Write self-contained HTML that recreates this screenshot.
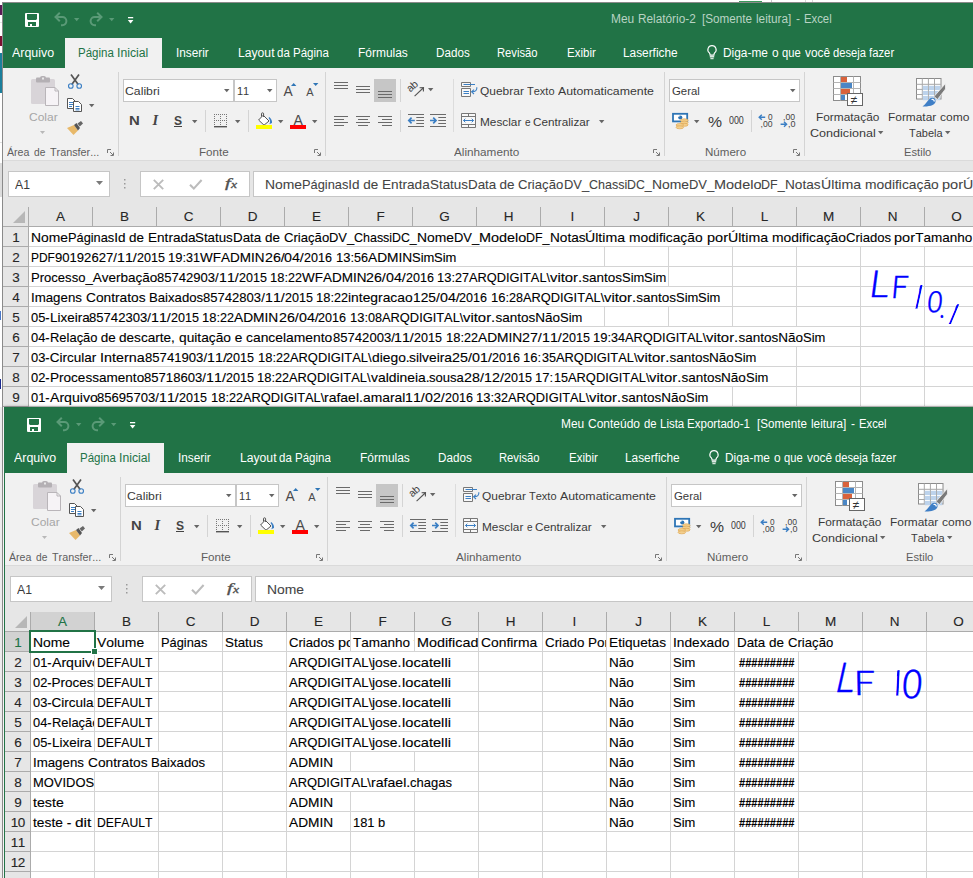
<!DOCTYPE html>
<html lang="pt-BR"><head><meta charset="utf-8"><title>Excel</title>
<style>
html,body{margin:0;padding:0;}
body{width:973px;height:878px;overflow:hidden;position:relative;background:#fff;font-family:"Liberation Sans", sans-serif;color:#3a3a3a;}
div,svg,span{position:absolute;}
.w{overflow:hidden;}
.t,.c,.h{white-space:pre;line-height:20px;height:20px;font-kerning:none;transform-origin:0 0;}
.c{font-size:13.5px;color:#000;-webkit-text-stroke:0.12px #000;}
.f{color:#444;-webkit-text-stroke:0.08px #444;}
.b{font-weight:bold;}
.hs{left:0;top:0;overflow:hidden;transform-origin:0 0;}
.hw{left:0;top:0;line-height:1;-webkit-text-stroke:0.3px #0000ff;white-space:pre;transform-origin:0 0;font-family:'Noto Sans CJK JP','DejaVu Sans','Liberation Sans',sans-serif;}
.h{font-size:13.5px;text-align:center;-webkit-text-stroke:0.12px;}
.n{letter-spacing:-0.5px;}
svg{overflow:visible;}
</style></head><body>
<div style="left:0px;top:5px;width:2px;height:10px;background:#5a1a55;"></div><div style="left:0px;top:22px;width:2px;height:1px;background:#e4e4e4;"></div><div style="left:0px;top:36px;width:2px;height:10px;background:#7a1030;"></div><div style="left:0px;top:53px;width:2px;height:40px;background:#1b7f9c;"></div><div style="left:0px;top:142px;width:2px;height:1px;background:#e0e0e0;"></div><div style="left:0px;top:163px;width:2px;height:34px;background:#dcdcdc;"></div><div style="left:0px;top:311px;width:1px;height:9px;background:#4a78c8;"></div><div style="left:0px;top:379px;width:1px;height:10px;background:#1a2a90;"></div><div style="left:0px;top:407px;width:2px;height:471px;background:#ededed;"></div><div style="left:2px;top:2px;width:1px;height:876px;background:#8a8a8a;"></div><div style="left:3px;top:407px;width:1px;height:471px;background:#f4f4f4;"></div><div style="left:739px;top:1px;width:23px;height:1px;background:#3c9a5c;"></div><div style="left:771px;top:0px;width:1px;height:2px;background:#c8c8c8;"></div><div style="left:805px;top:0px;width:1px;height:2px;background:#d8d8d8;"></div><div style="left:812px;top:0px;width:1px;height:2px;background:#d8d8d8;"></div><div class="w" style="left:0;top:0;width:973px;height:407px"><div style="left:2px;top:2px;width:980px;height:900px;background:#8a8a8a;"></div><div style="left:3px;top:3px;width:980px;height:65px;background:#217346;"></div><div style="left:3px;top:68px;width:980px;height:92px;background:#f1f1f1;"></div><div style="left:3px;top:160px;width:980px;height:1px;background:#dadada;"></div><div style="left:3px;top:161px;width:980px;height:46px;background:#e6e6e6;"></div><span class="t" style="left:611.20px;top:9px;font-size:12.5px;color:#b9d3c4;transform:scaleX(0.954);">Meu </span><span class="t" style="left:638.11px;top:9px;font-size:12.5px;color:#b9d3c4;transform:scaleX(0.944);">Relatório-2  </span><span class="t" style="left:702.41px;top:9px;font-size:12.5px;color:#b9d3c4;transform:scaleX(0.936);">[Somente </span><span class="t" style="left:756.01px;top:9px;font-size:12.5px;color:#b9d3c4;transform:scaleX(0.940);">leitura] </span><span class="t" style="left:796.29px;top:9px;font-size:12.5px;color:#b9d3c4;transform:scaleX(0.962);">- </span><span class="t" style="left:804.14px;top:9px;font-size:12.5px;color:#b9d3c4;transform:scaleX(0.905);">Excel</span><svg style="left:25px;top:13px;" width="14" height="14" viewBox="0 0 14 14"><rect x="0" y="0" width="14" height="14" rx="1" fill="#fff"/><path d="M2 1H12V6L11 7H3L2 6Z" fill="#217346"/><path d="M3 9H11V13H7V11H5V13H3Z" fill="#217346"/></svg><svg style="left:54px;top:12px;" width="14" height="14" viewBox="0 0 14 14"><path d="M1.4 5H8.3A4.1 4.1 0 0 1 8.3 13.2H7" fill="none" stroke="#5a9a77" stroke-width="2"/><path d="M5.8 0.8L1.5 5L5.8 9.2" fill="none" stroke="#5a9a77" stroke-width="2"/></svg><svg style="left:74px;top:18px;" width="5.4" height="3.2" viewBox="0 0 5.4 3.2"><path d="M0 0H5.4L2.7 3.2Z" fill="#5a9a77"/></svg><svg style="left:89px;top:12px;" width="14" height="14" viewBox="0 0 14 14"><path d="M12.6 5H5.7A4.1 4.1 0 0 0 5.7 13.2H7" fill="none" stroke="#5a9a77" stroke-width="2"/><path d="M8.2 0.8L12.5 5L8.2 9.2" fill="none" stroke="#5a9a77" stroke-width="2"/></svg><svg style="left:109px;top:18px;" width="5.4" height="3.2" viewBox="0 0 5.4 3.2"><path d="M0 0H5.4L2.7 3.2Z" fill="#5a9a77"/></svg><svg style="left:128px;top:17px;" width="5" height="7" viewBox="0 0 5 7"><rect x="0" y="0" width="5.2" height="1.3" fill="#fff"/><path d="M-0.2 3H5.4L2.6 6.4Z" fill="#fff"/></svg><div style="left:65px;top:38px;width:97px;height:30px;background:#f1f1f1;"></div><span class="t" style="left:12.25px;top:43px;font-size:12.5px;color:#ffffff;transform:scaleX(0.994);">Arquivo</span><span class="t" style="left:176.31px;top:43px;font-size:12.5px;color:#ffffff;transform:scaleX(0.943);">Inserir</span><span class="t" style="left:357.69px;top:43px;font-size:12.5px;color:#ffffff;transform:scaleX(0.956);">Fórmulas</span><span class="t" style="left:435.62px;top:43px;font-size:12.5px;color:#ffffff;transform:scaleX(0.933);">Dados</span><span class="t" style="left:497.45px;top:43px;font-size:12.5px;color:#ffffff;transform:scaleX(0.899);">Revisão</span><span class="t" style="left:566.53px;top:43px;font-size:12.5px;color:#ffffff;transform:scaleX(0.922);">Exibir</span><span class="t" style="left:623.40px;top:43px;font-size:12.5px;color:#ffffff;transform:scaleX(0.947);">Laserfiche</span><span class="t" style="left:77.73px;top:43px;font-size:12.5px;color:#217346;transform:scaleX(0.922);">Página </span><span class="t" style="left:117.47px;top:43px;font-size:12.5px;color:#217346;transform:scaleX(0.977);">Inicial</span><span class="t" style="left:237.78px;top:43px;font-size:12.5px;color:#ffffff;transform:scaleX(0.973);">Layout </span><span class="t" style="left:277.33px;top:43px;font-size:12.5px;color:#ffffff;transform:scaleX(0.919);">da </span><span class="t" style="left:293.03px;top:43px;font-size:12.5px;color:#ffffff;transform:scaleX(0.922);">Página</span><span class="t" style="left:722.90px;top:43px;font-size:12.5px;color:#ffffff;transform:scaleX(0.950);">Diga-me </span><span class="t" style="left:771.90px;top:43px;font-size:12.5px;color:#ffffff;transform:scaleX(0.950);">o </span><span class="t" style="left:782.16px;top:43px;font-size:12.5px;color:#ffffff;transform:scaleX(0.895);">que </span><span class="t" style="left:805.25px;top:43px;font-size:12.5px;color:#ffffff;transform:scaleX(0.950);">você </span><span class="t" style="left:833.16px;top:43px;font-size:12.5px;color:#ffffff;transform:scaleX(0.895);">deseja </span><span class="t" style="left:868.95px;top:43px;font-size:12.5px;color:#ffffff;transform:scaleX(0.905);">fazer</span><svg style="left:706.6px;top:45px;" width="10" height="15" viewBox="0 0 10 15"><path d="M5 0.6A4.1 4.1 0 0 0 2.4 7.9C2.9 8.6 3.1 9.2 3.1 10.1H6.9C6.9 9.2 7.1 8.6 7.6 7.9A4.1 4.1 0 0 0 5 0.6Z" fill="none" stroke="#fff" stroke-width="1.15"/><path d="M2.8 11.8H7.2" stroke="#fff" stroke-width="1.3" fill="none"/><path d="M3.4 13.7H6.6" stroke="#fff" stroke-width="1" fill="none"/></svg><svg style="left:31px;top:76px;" width="28" height="30" viewBox="0 0 28 30"><rect x="0" y="3" width="24" height="25" rx="1.5" fill="#d8d4d8"/><rect x="5" y="1.5" width="14" height="5" rx="1" fill="#b4b0b4"/><rect x="9" y="0" width="6" height="4" rx="2" fill="#b4b0b4"/><rect x="11" y="1.5" width="2" height="2" fill="#e8e8e8"/><path d="M14.5 11.5H24L27.5 15V29.5H14.5Z" fill="#f6f3f6" stroke="#b9b5b9" stroke-width="1"/><path d="M24 11.5V15H27.5" fill="none" stroke="#b9b5b9" stroke-width="1"/></svg><span class="t" style="left:28.81px;top:107px;font-size:11.5px;color:#a6a6a6;transform:scaleX(1.044);">Colar</span><svg style="left:40px;top:131px;" width="5" height="3" viewBox="0 0 5 3"><path d="M0 0H5L2.5 3Z" fill="#b8b8b8"/></svg><svg style="left:68px;top:74px;" width="14" height="15" viewBox="0 0 14 15"><path d="M3 0.5L10.2 10.5M11 0.5L3.8 10.5" stroke="#555" stroke-width="1.7" fill="none"/><circle cx="2.8" cy="12" r="2.3" fill="none" stroke="#3b7fc4" stroke-width="1.1"/><circle cx="11.2" cy="12" r="2.3" fill="none" stroke="#3b7fc4" stroke-width="1.1"/></svg><svg style="left:67px;top:98px;" width="16" height="14" viewBox="0 0 16 14"><path d="M0.5 0.5H5.5L8.5 3.5V10.5H0.5Z" fill="#fff" stroke="#555"/><path d="M2 4.5H6M2 6.5H6M2 8.5H5" stroke="#3b7fc4" fill="none"/><path d="M6.5 3.5H11.5L14.5 6.5V13.5H6.5Z" fill="#fff" stroke="#555"/><path d="M8.5 8.5H12.5M8.5 10.5H12.5M8.5 11.9H12.5" stroke="#3b7fc4" fill="none"/></svg><svg style="left:89px;top:104px;" width="5.4" height="3.3" viewBox="0 0 5.4 3.3"><path d="M0 0H5.4L2.7 3.3Z" fill="#666666"/></svg><svg style="left:67px;top:121px;" width="16" height="14" viewBox="0 0 16 14"><path d="M0 7L7 4L11 9.5L6.5 14Z" fill="#e8b96a"/><path d="M7 4L9.5 2L13 7L11 9.5Z" fill="#555"/><path d="M10.5 2.5L14 0L16 2.5L12.8 5.5Z" fill="#666"/></svg><span class="t" style="left:7.45px;top:142px;font-size:11.5px;color:#5e5e5e;transform:scaleX(0.923);">Área </span><span class="t" style="left:33.55px;top:142px;font-size:11.5px;color:#5e5e5e;transform:scaleX(0.885);">de </span><span class="t" style="left:49.55px;top:142px;font-size:11.5px;color:#5e5e5e;transform:scaleX(0.938);">Transfer...</span><svg style="left:107px;top:149px;" width="7" height="7" viewBox="0 0 7 7"><path d="M0.5 4V0.5H4" fill="none" stroke="#777" stroke-width="1"/><path d="M3 3L6 6M6.5 3.5V6.5H3.5" fill="none" stroke="#777" stroke-width="1"/></svg><div style="left:118px;top:72px;width:1px;height:84px;background:#d4d4d4;"></div><div style="left:123px;top:79px;width:111px;height:23px;background:#fff;border:1px solid #c6c6c6;box-sizing:border-box;"></div><span class="t" style="left:125.48px;top:81px;font-size:11.5px;transform:scaleX(1.066);">Calibri</span><svg style="left:224px;top:89px;" width="5.5" height="3.3" viewBox="0 0 5.5 3.3"><path d="M0 0H5.5L2.75 3.3Z" fill="#666666"/></svg><div style="left:234px;top:79px;width:43px;height:23px;background:#fff;border:1px solid #c6c6c6;box-sizing:border-box;"></div><span class="t" style="left:237.10px;top:81px;font-size:11.5px;transform:scaleX(0.955);">11</span><svg style="left:266.8px;top:89px;" width="5.5" height="3.3" viewBox="0 0 5.5 3.3"><path d="M0 0H5.5L2.75 3.3Z" fill="#666666"/></svg><span class="t" style="left:283.55px;top:82px;font-size:13.8px;color:#4a4a4a;">A</span><svg style="left:291px;top:83px;" width="5.4" height="3" viewBox="0 0 5.4 3"><path d="M0 3H5.4L2.7 0Z" fill="#2e75b6"/></svg><span class="t" style="left:306.35px;top:82px;font-size:11px;color:#4a4a4a;">A</span><svg style="left:313px;top:83px;" width="5.4" height="3" viewBox="0 0 5.4 3"><path d="M0 0H5.4L2.7 3Z" fill="#2e75b6"/></svg><span class="t" style="left:128.86px;top:111px;font-size:12.5px;color:#444;transform:scaleX(1.193);font-weight:bold;">N</span><span class="t" style="left:152.45px;top:110px;font-size:14.5px;color:#444;font-weight:bold;font-style:italic;font-family:'Liberation Serif', serif;">I</span><span class="t" style="left:173.79px;top:111px;font-size:12.5px;color:#444;transform:scaleX(0.964);font-weight:bold;">S</span><div style="left:174px;top:126px;width:8px;height:1px;background:#444;"></div><svg style="left:191.7px;top:120px;" width="5.4" height="3.3" viewBox="0 0 5.4 3.3"><path d="M0 0H5.4L2.7 3.3Z" fill="#666666"/></svg><div style="left:205px;top:110px;width:1px;height:22px;background:#d4d4d4;"></div><svg style="left:214px;top:114px;" width="14" height="14" viewBox="0 0 14 14"><rect x="0" y="0" width="1" height="1" fill="#777"/><rect x="2" y="0" width="1" height="1" fill="#777"/><rect x="4" y="0" width="1" height="1" fill="#777"/><rect x="6" y="0" width="1" height="1" fill="#777"/><rect x="8" y="0" width="1" height="1" fill="#777"/><rect x="10" y="0" width="1" height="1" fill="#777"/><rect x="12" y="0" width="1" height="1" fill="#777"/><rect x="0" y="6" width="1" height="1" fill="#777"/><rect x="2" y="6" width="1" height="1" fill="#777"/><rect x="4" y="6" width="1" height="1" fill="#777"/><rect x="6" y="6" width="1" height="1" fill="#777"/><rect x="8" y="6" width="1" height="1" fill="#777"/><rect x="10" y="6" width="1" height="1" fill="#777"/><rect x="12" y="6" width="1" height="1" fill="#777"/><rect x="0" y="0" width="1" height="1" fill="#777"/><rect x="0" y="2" width="1" height="1" fill="#777"/><rect x="0" y="4" width="1" height="1" fill="#777"/><rect x="0" y="6" width="1" height="1" fill="#777"/><rect x="0" y="8" width="1" height="1" fill="#777"/><rect x="0" y="10" width="1" height="1" fill="#777"/><rect x="6" y="0" width="1" height="1" fill="#777"/><rect x="6" y="2" width="1" height="1" fill="#777"/><rect x="6" y="4" width="1" height="1" fill="#777"/><rect x="6" y="6" width="1" height="1" fill="#777"/><rect x="6" y="8" width="1" height="1" fill="#777"/><rect x="6" y="10" width="1" height="1" fill="#777"/><rect x="12" y="0" width="1" height="1" fill="#777"/><rect x="12" y="2" width="1" height="1" fill="#777"/><rect x="12" y="4" width="1" height="1" fill="#777"/><rect x="12" y="6" width="1" height="1" fill="#777"/><rect x="12" y="8" width="1" height="1" fill="#777"/><rect x="12" y="10" width="1" height="1" fill="#777"/><rect x="0" y="12" width="13" height="1.4" fill="#555"/></svg><svg style="left:235px;top:120px;" width="5.4" height="3.3" viewBox="0 0 5.4 3.3"><path d="M0 0H5.4L2.7 3.3Z" fill="#666666"/></svg><div style="left:248px;top:110px;width:1px;height:22px;background:#d4d4d4;"></div><svg style="left:256px;top:112px;" width="17" height="17" viewBox="0 0 17 17"><path d="M7.2 3.2L13 9L8 13.2L2.6 8Z" fill="#fff" stroke="#555" stroke-width="1"/><path d="M5.5 4.5V1.8Q5.5 0.8 6.5 0.8Q7.6 0.8 7.6 1.8V5" stroke="#555" fill="none"/><path d="M13.3 5C15.5 7 16.3 9 16 11L13.3 12.3C14.5 10 14.3 8 12.5 6Z" fill="#3b7fc4"/><rect x="0" y="13" width="16" height="4" fill="#ffff00"/></svg><svg style="left:278px;top:120px;" width="5.4" height="3.3" viewBox="0 0 5.4 3.3"><path d="M0 0H5.4L2.7 3.3Z" fill="#666666"/></svg><span class="t" style="left:293.55px;top:110px;font-size:14px;color:#4a4a4a;">A</span><div style="left:290px;top:125px;width:16px;height:4px;background:#ff0000;"></div><svg style="left:312px;top:120px;" width="5.4" height="3.3" viewBox="0 0 5.4 3.3"><path d="M0 0H5.4L2.7 3.3Z" fill="#666666"/></svg><span class="t" style="left:199.04px;top:142px;font-size:11.5px;color:#5e5e5e;transform:scaleX(1.012);">Fonte</span><svg style="left:314px;top:149px;" width="7" height="7" viewBox="0 0 7 7"><path d="M0.5 4V0.5H4" fill="none" stroke="#777" stroke-width="1"/><path d="M3 3L6 6M6.5 3.5V6.5H3.5" fill="none" stroke="#777" stroke-width="1"/></svg><div style="left:325px;top:72px;width:1px;height:84px;background:#d4d4d4;"></div><div style="left:374px;top:79px;width:22px;height:23px;background:#c6c6c6;"></div><svg style="left:334px;top:80px;" width="16" height="16" viewBox="0 0 16 16"><rect x="0" y="2" width="14" height="1" fill="#6a6a6a"/><rect x="0" y="5" width="14" height="1" fill="#6a6a6a"/><rect x="0" y="8" width="14" height="1" fill="#6a6a6a"/></svg><svg style="left:356px;top:80px;" width="16" height="16" viewBox="0 0 16 16"><rect x="0" y="6" width="14" height="1" fill="#6a6a6a"/><rect x="0" y="9" width="14" height="1" fill="#6a6a6a"/><rect x="0" y="12" width="14" height="1" fill="#6a6a6a"/></svg><svg style="left:378px;top:80px;" width="16" height="16" viewBox="0 0 16 16"><rect x="0" y="11" width="14" height="1" fill="#6a6a6a"/><rect x="0" y="14" width="14" height="1" fill="#6a6a6a"/><rect x="0" y="17" width="14" height="1" fill="#6a6a6a"/></svg><div style="left:400px;top:79px;width:1px;height:23px;background:#d4d4d4;"></div><svg style="left:408px;top:81px;" width="18" height="17" viewBox="0 0 18 17"><text x="2.3" y="11.6" font-size="10.5" fill="#444" transform="rotate(-42 2.3 11.6)" font-family="Liberation Sans, sans-serif" letter-spacing="-0.3">ab</text><path d="M6.6 15.2L15.2 7M11.6 6.8L15.5 6.6L15.4 10.4" stroke="#555" fill="none" stroke-width="1.1"/></svg><svg style="left:428px;top:88px;" width="5.4" height="3.3" viewBox="0 0 5.4 3.3"><path d="M0 0H5.4L2.7 3.3Z" fill="#666666"/></svg><svg style="left:334px;top:114px;" width="16" height="16" viewBox="0 0 16 16"><rect x="0" y="2" width="14" height="1" fill="#6a6a6a"/><rect x="0" y="5" width="10" height="1" fill="#6a6a6a"/><rect x="0" y="8" width="14" height="1" fill="#6a6a6a"/><rect x="0" y="11" width="10" height="1" fill="#6a6a6a"/></svg><svg style="left:356px;top:114px;" width="16" height="16" viewBox="0 0 16 16"><rect x="0" y="2" width="14" height="1" fill="#6a6a6a"/><rect x="2" y="5" width="10" height="1" fill="#6a6a6a"/><rect x="0" y="8" width="14" height="1" fill="#6a6a6a"/><rect x="2" y="11" width="10" height="1" fill="#6a6a6a"/></svg><svg style="left:378px;top:114px;" width="16" height="16" viewBox="0 0 16 16"><rect x="0" y="2" width="14" height="1" fill="#6a6a6a"/><rect x="4" y="5" width="10" height="1" fill="#6a6a6a"/><rect x="0" y="8" width="14" height="1" fill="#6a6a6a"/><rect x="4" y="11" width="10" height="1" fill="#6a6a6a"/></svg><div style="left:400px;top:110px;width:1px;height:22px;background:#d4d4d4;"></div><svg style="left:408px;top:114px;" width="16" height="14" viewBox="0 0 16 14"><path d="M0 0.5H16M8.3 3.5H16M8.3 6.5H16M8.3 9.5H16M0 12.5H16" stroke="#6a6a6a" fill="none"/><path d="M6.8 6.5H1M3.6 3.7L0.8 6.5L3.6 9.3" stroke="#3b7fc4" stroke-width="1.7" fill="none"/></svg><svg style="left:430px;top:114px;" width="16" height="14" viewBox="0 0 16 14"><path d="M0 0.5H16M8.3 3.5H16M8.3 6.5H16M8.3 9.5H16M0 12.5H16" stroke="#6a6a6a" fill="none"/><path d="M0 6.5H5.8M3.2 3.7L6 6.5L3.2 9.3" stroke="#3b7fc4" stroke-width="1.7" fill="none"/></svg><div style="left:453px;top:79px;width:1px;height:53px;background:#dcdcdc;"></div><svg style="left:461px;top:82px;" width="17" height="15" viewBox="0 0 17 15"><path d="M0.5 0.5H9.5V4.5H0.5ZM0.5 6.5H9.5V14.5H0.5Z" fill="#f8f8f8" stroke="#777"/><path d="M2.5 2.5H14M2.5 9.5H8M2.5 11.5H8" stroke="#3b7fc4" fill="none"/><path d="M15.8 5.2C16.2 8.2 14.5 9.8 11 9.8M13 7.6L10.6 9.8L13 12" stroke="#3b7fc4" fill="none" stroke-width="1.1"/></svg><span class="t" style="left:479.71px;top:81px;font-size:11.5px;transform:scaleX(1.040);">Quebrar </span><span class="t" style="left:527.45px;top:81px;font-size:11.5px;transform:scaleX(0.957);">Texto </span><span class="t" style="left:557.65px;top:81px;font-size:11.5px;transform:scaleX(1.072);">Automaticamente</span><svg style="left:461px;top:113px;" width="16" height="16" viewBox="0 0 16 16"><path d="M0.5 0.5H14.5V14.5H0.5Z" fill="#f8f8f8" stroke="#777"/><path d="M0.5 3.5H14.5M0.5 11.5H14.5M7.5 0.5V3.5M7.5 11.5V14.5" stroke="#777" fill="none"/><path d="M2.5 7.5H12.5M4.3 5.7L2.5 7.5L4.3 9.3M10.7 5.7L12.5 7.5L10.7 9.3" stroke="#3b7fc4" fill="none"/></svg><span class="t" style="left:479.72px;top:112px;font-size:11.5px;transform:scaleX(1.027);">Mesclar </span><span class="t" style="left:524.95px;top:112px;font-size:11.5px;transform:scaleX(0.867);">e </span><span class="t" style="left:532.83px;top:112px;font-size:11.5px;transform:scaleX(1.019);">Centralizar</span><svg style="left:598.8px;top:120px;" width="5.4" height="3.3" viewBox="0 0 5.4 3.3"><path d="M0 0H5.4L2.7 3.3Z" fill="#666666"/></svg><span class="t" style="left:454.25px;top:142px;font-size:11.5px;color:#5e5e5e;transform:scaleX(1.020);">Alinhamento</span><svg style="left:653px;top:149px;" width="7" height="7" viewBox="0 0 7 7"><path d="M0.5 4V0.5H4" fill="none" stroke="#777" stroke-width="1"/><path d="M3 3L6 6M6.5 3.5V6.5H3.5" fill="none" stroke="#777" stroke-width="1"/></svg><div style="left:664px;top:72px;width:1px;height:84px;background:#d4d4d4;"></div><div style="left:669px;top:79px;width:131px;height:23px;background:#fff;border:1px solid #c6c6c6;box-sizing:border-box;"></div><span class="t" style="left:671.76px;top:81px;font-size:11.5px;transform:scaleX(0.990);">Geral</span><svg style="left:790px;top:89px;" width="5.5" height="3.3" viewBox="0 0 5.5 3.3"><path d="M0 0H5.5L2.75 3.3Z" fill="#666666"/></svg><svg style="left:672px;top:112px;" width="17" height="18" viewBox="0 0 17 18"><rect x="1" y="1.8" width="14.2" height="7.6" fill="#fff" stroke="#2e75b6" stroke-width="1.8"/><circle cx="8.3" cy="5.5" r="2.1" fill="#2e75b6"/><path d="M6 4.2H7.6" stroke="#fff" stroke-width="0.8"/><ellipse cx="12.3" cy="8.3" rx="3.8" ry="1.5" fill="#f3cf8d" stroke="#e0a958" stroke-width="0.7"/><ellipse cx="12.3" cy="10.6" rx="3.8" ry="1.5" fill="#f3cf8d" stroke="#e0a958" stroke-width="0.7"/><ellipse cx="12.3" cy="12.8" rx="3.8" ry="1.5" fill="#f3cf8d" stroke="#e0a958" stroke-width="0.7"/><ellipse cx="7.8" cy="13" rx="3.8" ry="1.5" fill="#f3cf8d" stroke="#e0a958" stroke-width="0.7"/><ellipse cx="7.8" cy="15.3" rx="3.8" ry="1.5" fill="#f3cf8d" stroke="#e0a958" stroke-width="0.7"/></svg><svg style="left:694px;top:120px;" width="5.4" height="3.3" viewBox="0 0 5.4 3.3"><path d="M0 0H5.4L2.7 3.3Z" fill="#666666"/></svg><span class="t" style="left:707.51px;top:112px;font-size:15.2px;transform:scaleX(1.038);">%</span><span class="t" style="left:729.05px;top:110px;font-size:10.6px;transform:scaleX(0.838);">000</span><div style="left:751px;top:110px;width:1px;height:22px;background:#d4d4d4;"></div><svg style="left:758px;top:113px;" width="16" height="16" viewBox="0 0 16 16"><path d="M1.2 4.3H7.2M3.8 1.8L1.2 4.3L3.8 6.8" stroke="#3b7fc4" stroke-width="1.4" fill="none"/><text x="10" y="6.6" font-size="9" font-family="Liberation Sans, sans-serif" fill="#444" textLength="4.6" lengthAdjust="spacingAndGlyphs">0</text><text x="2.6" y="14" font-size="9" font-family="Liberation Sans, sans-serif" fill="#444" textLength="12" lengthAdjust="spacingAndGlyphs">,00</text></svg><svg style="left:780px;top:113px;" width="16" height="16" viewBox="0 0 16 16"><text x="3" y="6.6" font-size="9" font-family="Liberation Sans, sans-serif" fill="#444" textLength="12" lengthAdjust="spacingAndGlyphs">,00</text><path d="M0.6 11.3H6.6M4 8.8L6.6 11.3L4 13.8" stroke="#3b7fc4" stroke-width="1.4" fill="none"/><text x="8" y="14" font-size="9" font-family="Liberation Sans, sans-serif" fill="#444" textLength="7.5" lengthAdjust="spacingAndGlyphs">,0</text></svg><span class="t" style="left:705.24px;top:142px;font-size:11.5px;color:#5e5e5e;transform:scaleX(1.006);">Número</span><svg style="left:793px;top:149px;" width="7" height="7" viewBox="0 0 7 7"><path d="M0.5 4V0.5H4" fill="none" stroke="#777" stroke-width="1"/><path d="M3 3L6 6M6.5 3.5V6.5H3.5" fill="none" stroke="#777" stroke-width="1"/></svg><div style="left:804px;top:72px;width:1px;height:84px;background:#d4d4d4;"></div><svg style="left:833px;top:76px;" width="30" height="30" viewBox="0 0 30 30"><rect x="0.5" y="0.5" width="27" height="24" fill="#fff" stroke="#8c8c8c"/><path d="M0.5 6.5H27.5M0.5 12.5H27.5M0.5 18.5H27.5M7.5 0.5V24.5M20.5 0.5V24.5" stroke="#b4b4b4" fill="none"/><rect x="8" y="1" width="6" height="5" fill="#d9623b"/><rect x="8" y="7" width="11" height="5" fill="#4a86c5"/><rect x="8" y="13" width="9" height="5" fill="#d9623b"/><rect x="8" y="19" width="4" height="5" fill="#4a86c5"/><rect x="14.5" y="17.5" width="15" height="12" fill="#fff" stroke="#666"/><text x="17.8" y="27.5" font-size="12" fill="#333" font-family="Liberation Sans, sans-serif">≠</text></svg><span class="t" style="left:815.52px;top:107px;font-size:11.5px;transform:scaleX(1.033);">Formatação</span><span class="t" style="left:810.46px;top:123px;font-size:11.5px;transform:scaleX(1.094);">Condicional</span><svg style="left:878.3px;top:131px;" width="5.4" height="3.3" viewBox="0 0 5.4 3.3"><path d="M0 0H5.4L2.7 3.3Z" fill="#666666"/></svg><svg style="left:916px;top:78px;" width="31" height="29" viewBox="0 0 31 29"><rect x="0.5" y="0.5" width="24.5" height="20.5" fill="#fff" stroke="#8c8c8c"/><path d="M0.5 6.3H25M0.5 11.4H25M0.5 16.5H25M6.3 0.5V21M12.4 0.5V21M18.5 0.5V21" stroke="#a8a8a8" fill="none"/><rect x="6.8" y="7.8" width="5.2" height="4.2" fill="#bdd3ec"/><rect x="12.899999999999999" y="7.8" width="5.2" height="4.2" fill="#bdd3ec"/><rect x="19.0" y="7.8" width="5.2" height="4.2" fill="#bdd3ec"/><rect x="6.8" y="12.899999999999999" width="5.2" height="4.2" fill="#bdd3ec"/><rect x="12.899999999999999" y="12.899999999999999" width="5.2" height="4.2" fill="#bdd3ec"/><rect x="19.0" y="12.899999999999999" width="5.2" height="4.2" fill="#bdd3ec"/><rect x="6.8" y="18.0" width="5.2" height="4.2" fill="#bdd3ec"/><rect x="12.899999999999999" y="18.0" width="5.2" height="4.2" fill="#bdd3ec"/><rect x="19.0" y="18.0" width="5.2" height="4.2" fill="#bdd3ec"/><path d="M29.5 5.5L29.5 11L21.5 21.5L18 18.5Z" fill="#7a7a7a" stroke="#f1f1f1" stroke-width="0.8"/><path d="M6.5 28.5C10 26 11.5 22.5 14 20.5C16 19 19.5 20 19.6 23C19.6 26.5 15 28.8 6.5 28.5Z" fill="#3f7fc6"/><path d="M15.5 21.5C17 21 18.3 21.8 18.3 23.5" stroke="#fff" stroke-width="1.3" fill="none"/></svg><span class="t" style="left:888.02px;top:107px;font-size:11.5px;transform:scaleX(1.034);">Formatar </span><span class="t" style="left:940.15px;top:107px;font-size:11.5px;transform:scaleX(1.048);">como</span><span class="t" style="left:909.35px;top:123px;font-size:11.5px;transform:scaleX(0.954);">Tabela</span><svg style="left:945px;top:131px;" width="5.4" height="3.3" viewBox="0 0 5.4 3.3"><path d="M0 0H5.4L2.7 3.3Z" fill="#666666"/></svg><span class="t" style="left:904.08px;top:142px;font-size:11.5px;color:#5e5e5e;transform:scaleX(0.972);">Estilo</span><div style="left:8px;top:171px;width:102px;height:26px;background:#fff;border:1px solid #c6c6c6;box-sizing:border-box;"></div><span class="t" style="left:15.25px;top:175px;font-size:13px;transform:scaleX(0.941);">A1</span><svg style="left:96px;top:181px;" width="7" height="4" viewBox="0 0 7 4"><path d="M0 0H7L3.5 4Z" fill="#7a7a7a"/></svg><svg style="left:124px;top:179px;" width="2" height="10" viewBox="0 0 2 10"><rect x="0" y="0" width="1.5" height="1.5" fill="#999"/><rect x="0" y="4" width="1.5" height="1.5" fill="#999"/><rect x="0" y="8" width="1.5" height="1.5" fill="#999"/></svg><div style="left:140px;top:171px;width:110px;height:26px;background:#fff;border:1px solid #c6c6c6;box-sizing:border-box;"></div><svg style="left:153px;top:178.5px;" width="11" height="11" viewBox="0 0 11 11"><path d="M0.8 0.8L10.2 10.2M10.2 0.8L0.8 10.2" stroke="#bcbcbc" stroke-width="1.9" fill="none"/></svg><svg style="left:188.5px;top:178.5px;" width="14" height="11" viewBox="0 0 14 11"><path d="M1 5.8L4.8 9.6L12.6 1" stroke="#bcbcbc" stroke-width="2.1" fill="none"/></svg><span class="t" style="left:225.15px;top:173px;font-size:12.4px;color:#505050;transform:scaleX(1.670);font-style:italic;font-family:'Liberation Serif', serif;-webkit-text-stroke:0.3px #505050;">f</span><span class="t" style="left:230.65px;top:174px;font-size:10.8px;color:#505050;transform:scaleX(1.270);font-style:italic;font-family:'Liberation Serif', serif;-webkit-text-stroke:0.3px #505050;">x</span><div style="left:253px;top:171px;width:730px;height:26px;background:#fff;border:1px solid #c6c6c6;box-sizing:border-box;"></div><div style="left:254px;top:172px;width:730px;height:24px;overflow:hidden"><span class="c f" style="left:10.80px;top:3px;transform:scaleX(1.029);">Nome</span><span class="c f" style="left:47.84px;top:3px;transform:scaleX(0.950);">Páginas</span><span class="c f" style="left:94.21px;top:3px;">Id </span><span class="c f" style="left:109.26px;top:3px;">de </span><span class="c f" style="left:127.99px;top:3px;transform:scaleX(1.009);">Entrada</span><span class="c f" style="left:175.70px;top:3px;transform:scaleX(0.990);">Status</span><span class="c f" style="left:213.58px;top:3px;transform:scaleX(0.992);">Data </span><span class="c f" style="left:245.59px;top:3px;">de </span><span class="c f" style="left:264.33px;top:3px;transform:scaleX(0.974);">Criação</span><span class="c f" style="left:309.62px;top:3px;transform:scaleX(0.960);">DV_</span><span class="c f" style="left:334.83px;top:3px;transform:scaleX(0.927);">Chassi</span><span class="c f" style="left:373.07px;top:3px;transform:scaleX(0.914);">DC_</span><span class="c f" style="left:397.77px;top:3px;transform:scaleX(1.029);">Nome</span><span class="c f" style="left:434.81px;top:3px;transform:scaleX(0.960);">DV_</span><span class="c f" style="left:460.02px;top:3px;transform:scaleX(1.071);">Modelo</span><span class="c f" style="left:507.45px;top:3px;transform:scaleX(0.925);">DF_</span><span class="c f" style="left:531.04px;top:3px;transform:scaleX(1.011);">Notas</span><span class="c f" style="left:566.71px;top:3px;transform:scaleX(1.050);">Última </span><span class="c f" style="left:610.80px;top:3px;transform:scaleX(1.024);">modificação </span><span class="c f" style="left:688.39px;top:3px;transform:scaleX(1.077);">por</span><span class="c f" style="left:709.41px;top:3px;transform:scaleX(1.050);">Última </span><span class="c f" style="left:753.51px;top:3px;transform:scaleX(1.030);">modificação</span></div><div style="left:3px;top:207px;width:980px;height:20px;background:#e6e6e6;"></div><div style="left:29px;top:227px;width:950px;height:180px;background:#fff;"></div><div style="left:3px;top:227px;width:25px;height:180px;background:#e6e6e6;"></div><div style="left:3px;top:226px;width:980px;height:1px;background:#ababab;"></div><div style="left:28px;top:207px;width:1px;height:200px;background:#ababab;"></div><div style="left:92px;top:207px;width:1px;height:19px;background:#ababab;"></div><div style="left:156px;top:207px;width:1px;height:19px;background:#ababab;"></div><div style="left:220px;top:207px;width:1px;height:19px;background:#ababab;"></div><div style="left:284px;top:207px;width:1px;height:19px;background:#ababab;"></div><div style="left:348px;top:207px;width:1px;height:19px;background:#ababab;"></div><div style="left:412px;top:207px;width:1px;height:19px;background:#ababab;"></div><div style="left:476px;top:207px;width:1px;height:19px;background:#ababab;"></div><div style="left:540px;top:207px;width:1px;height:19px;background:#ababab;"></div><div style="left:604px;top:207px;width:1px;height:19px;background:#ababab;"></div><div style="left:668px;top:207px;width:1px;height:19px;background:#ababab;"></div><div style="left:732px;top:207px;width:1px;height:19px;background:#ababab;"></div><div style="left:796px;top:207px;width:1px;height:19px;background:#ababab;"></div><div style="left:860px;top:207px;width:1px;height:19px;background:#ababab;"></div><div style="left:924px;top:207px;width:1px;height:19px;background:#ababab;"></div><div style="left:988px;top:207px;width:1px;height:19px;background:#ababab;"></div><svg style="left:13px;top:211px;" width="12" height="12" viewBox="0 0 12 12"><path d="M12 0V12H0Z" fill="#b7b7b7"/></svg><span class="h" style="left:29px;top:207px;width:63px;color:#262626">A</span><span class="h" style="left:93px;top:207px;width:63px;color:#262626">B</span><span class="h" style="left:157px;top:207px;width:63px;color:#262626">C</span><span class="h" style="left:221px;top:207px;width:63px;color:#262626">D</span><span class="h" style="left:285px;top:207px;width:63px;color:#262626">E</span><span class="h" style="left:349px;top:207px;width:63px;color:#262626">F</span><span class="h" style="left:413px;top:207px;width:63px;color:#262626">G</span><span class="h" style="left:477px;top:207px;width:63px;color:#262626">H</span><span class="h" style="left:541px;top:207px;width:63px;color:#262626">I</span><span class="h" style="left:605px;top:207px;width:63px;color:#262626">J</span><span class="h" style="left:669px;top:207px;width:63px;color:#262626">K</span><span class="h" style="left:733px;top:207px;width:63px;color:#262626">L</span><span class="h" style="left:797px;top:207px;width:63px;color:#262626">M</span><span class="h" style="left:861px;top:207px;width:63px;color:#262626">N</span><span class="h" style="left:925px;top:207px;width:63px;color:#262626">O</span><span class="h n" style="left:3px;top:228px;width:25.5px;color:#262626">1</span><div style="left:3px;top:246px;width:25px;height:1px;background:#ababab;"></div><span class="h n" style="left:3px;top:248px;width:25.5px;color:#262626">2</span><div style="left:3px;top:266px;width:25px;height:1px;background:#ababab;"></div><span class="h n" style="left:3px;top:268px;width:25.5px;color:#262626">3</span><div style="left:3px;top:286px;width:25px;height:1px;background:#ababab;"></div><span class="h n" style="left:3px;top:288px;width:25.5px;color:#262626">4</span><div style="left:3px;top:306px;width:25px;height:1px;background:#ababab;"></div><span class="h n" style="left:3px;top:308px;width:25.5px;color:#262626">5</span><div style="left:3px;top:326px;width:25px;height:1px;background:#ababab;"></div><span class="h n" style="left:3px;top:328px;width:25.5px;color:#262626">6</span><div style="left:3px;top:346px;width:25px;height:1px;background:#ababab;"></div><span class="h n" style="left:3px;top:348px;width:25.5px;color:#262626">7</span><div style="left:3px;top:366px;width:25px;height:1px;background:#ababab;"></div><span class="h n" style="left:3px;top:368px;width:25.5px;color:#262626">8</span><div style="left:3px;top:386px;width:25px;height:1px;background:#ababab;"></div><span class="h n" style="left:3px;top:388px;width:25.5px;color:#262626">9</span><div style="left:3px;top:406px;width:25px;height:1px;background:#ababab;"></div><div style="left:29px;top:246px;width:951px;height:1px;background:#d4d4d4;"></div><div style="left:988px;top:227px;width:1px;height:20px;background:#d4d4d4;"></div><span class="c" style="left:31.00px;top:228px;transform:scaleX(1.026);">Nome</span><span class="c" style="left:67.93px;top:228px;transform:scaleX(0.948);">Páginas</span><span class="c" style="left:114.17px;top:228px;">Id </span><span class="c" style="left:129.18px;top:228px;transform:scaleX(0.996);">de </span><span class="c" style="left:147.86px;top:228px;transform:scaleX(1.006);">Entrada</span><span class="c" style="left:195.44px;top:228px;transform:scaleX(0.987);">Status</span><span class="c" style="left:233.21px;top:228px;transform:scaleX(0.989);">Data </span><span class="c" style="left:265.13px;top:228px;transform:scaleX(0.996);">de </span><span class="c" style="left:283.81px;top:228px;transform:scaleX(0.971);">Criação</span><span class="c" style="left:328.98px;top:228px;transform:scaleX(0.957);">DV_</span><span class="c" style="left:354.12px;top:228px;transform:scaleX(0.924);">Chassi</span><span class="c" style="left:392.25px;top:228px;transform:scaleX(0.912);">DC_</span><span class="c" style="left:416.88px;top:228px;transform:scaleX(1.026);">Nome</span><span class="c" style="left:453.81px;top:228px;transform:scaleX(0.957);">DV_</span><span class="c" style="left:478.95px;top:228px;transform:scaleX(1.068);">Modelo</span><span class="c" style="left:526.25px;top:228px;transform:scaleX(0.922);">DF_</span><span class="c" style="left:549.77px;top:228px;transform:scaleX(1.009);">Notas</span><span class="c" style="left:585.34px;top:228px;transform:scaleX(1.047);">Última </span><span class="c" style="left:629.31px;top:228px;transform:scaleX(1.021);">modificação </span><span class="c" style="left:706.68px;top:228px;transform:scaleX(1.074);">por</span><span class="c" style="left:727.64px;top:228px;transform:scaleX(1.047);">Última </span><span class="c" style="left:771.61px;top:228px;transform:scaleX(1.027);">modificação</span><span class="c" style="left:845.60px;top:228px;transform:scaleX(0.970);">Criados </span><span class="c" style="left:894.37px;top:228px;transform:scaleX(1.074);">por</span><span class="c" style="left:915.33px;top:228px;">Tamanho</span><div style="left:29px;top:266px;width:951px;height:1px;background:#d4d4d4;"></div><div style="left:604px;top:247px;width:1px;height:20px;background:#d4d4d4;"></div><div style="left:668px;top:247px;width:1px;height:20px;background:#d4d4d4;"></div><div style="left:732px;top:247px;width:1px;height:20px;background:#d4d4d4;"></div><div style="left:796px;top:247px;width:1px;height:20px;background:#d4d4d4;"></div><div style="left:860px;top:247px;width:1px;height:20px;background:#d4d4d4;"></div><div style="left:924px;top:247px;width:1px;height:20px;background:#d4d4d4;"></div><div style="left:988px;top:247px;width:1px;height:20px;background:#d4d4d4;"></div><span class="c" style="left:31.00px;top:248px;transform:scaleX(0.885);">PDF</span><span class="c" style="left:54.89px;top:248px;transform:scaleX(0.969);">90192627/</span><span class="c" style="left:116.74px;top:248px;transform:scaleX(1.056);">11/</span><span class="c" style="left:136.55px;top:248px;transform:scaleX(0.930);">2015 </span><span class="c" style="left:167.97px;top:248px;transform:scaleX(0.961);">19:</span><span class="c" style="left:186.00px;top:248px;transform:scaleX(0.933);">31</span><span class="c" style="left:200.02px;top:248px;">WFADMIN</span><span class="c" style="left:264.51px;top:248px;transform:scaleX(1.056);">26/</span><span class="c" style="left:284.32px;top:248px;transform:scaleX(1.056);">04/</span><span class="c" style="left:304.13px;top:248px;transform:scaleX(0.930);">2016 </span><span class="c" style="left:335.55px;top:248px;transform:scaleX(0.961);">13:</span><span class="c" style="left:353.58px;top:248px;transform:scaleX(0.933);">56</span><span class="c" style="left:367.59px;top:248px;transform:scaleX(1.017);">ADMIN</span><span class="c" style="left:411.83px;top:248px;transform:scaleX(0.961);">Sim</span><span class="c" style="left:434.16px;top:248px;transform:scaleX(0.961);">Sim</span><div style="left:29px;top:286px;width:951px;height:1px;background:#d4d4d4;"></div><div style="left:668px;top:267px;width:1px;height:20px;background:#d4d4d4;"></div><div style="left:732px;top:267px;width:1px;height:20px;background:#d4d4d4;"></div><div style="left:796px;top:267px;width:1px;height:20px;background:#d4d4d4;"></div><div style="left:860px;top:267px;width:1px;height:20px;background:#d4d4d4;"></div><div style="left:924px;top:267px;width:1px;height:20px;background:#d4d4d4;"></div><div style="left:988px;top:267px;width:1px;height:20px;background:#d4d4d4;"></div><span class="c" style="left:31.00px;top:268px;transform:scaleX(0.967);">Processo_</span><span class="c" style="left:92.70px;top:268px;">Averbação</span><span class="c" style="left:157.23px;top:268px;transform:scaleX(0.967);">85742903/</span><span class="c" style="left:218.91px;top:268px;transform:scaleX(1.053);">11/</span><span class="c" style="left:238.67px;top:268px;transform:scaleX(0.927);">2015 </span><span class="c" style="left:270.00px;top:268px;transform:scaleX(0.958);">18:</span><span class="c" style="left:287.98px;top:268px;transform:scaleX(0.931);">22</span><span class="c" style="left:301.95px;top:268px;">WFADMIN</span><span class="c" style="left:366.27px;top:268px;transform:scaleX(1.053);">26/</span><span class="c" style="left:386.03px;top:268px;transform:scaleX(1.053);">04/</span><span class="c" style="left:405.78px;top:268px;transform:scaleX(0.927);">2016 </span><span class="c" style="left:437.12px;top:268px;transform:scaleX(0.958);">13:</span><span class="c" style="left:455.10px;top:268px;transform:scaleX(0.931);">27</span><span class="c" style="left:469.07px;top:268px;transform:scaleX(0.948);">ARQDIGITAL\</span><span class="c" style="left:550.18px;top:268px;transform:scaleX(1.098);">vitor.</span><span class="c" style="left:582.29px;top:268px;">santos</span><span class="c" style="left:621.95px;top:268px;transform:scaleX(0.958);">Sim</span><span class="c" style="left:644.22px;top:268px;transform:scaleX(0.958);">Sim</span><div style="left:29px;top:306px;width:951px;height:1px;background:#d4d4d4;"></div><div style="left:732px;top:287px;width:1px;height:20px;background:#d4d4d4;"></div><div style="left:796px;top:287px;width:1px;height:20px;background:#d4d4d4;"></div><div style="left:860px;top:287px;width:1px;height:20px;background:#d4d4d4;"></div><div style="left:924px;top:287px;width:1px;height:20px;background:#d4d4d4;"></div><div style="left:988px;top:287px;width:1px;height:20px;background:#d4d4d4;"></div><span class="c" style="left:31.00px;top:288px;transform:scaleX(0.983);">Imagens </span><span class="c" style="left:85.60px;top:288px;transform:scaleX(1.018);">Contratos </span><span class="c" style="left:149.00px;top:288px;transform:scaleX(0.974);">Baixados</span><span class="c" style="left:203.12px;top:288px;transform:scaleX(0.968);">85742803/</span><span class="c" style="left:264.90px;top:288px;transform:scaleX(1.054);">11/</span><span class="c" style="left:284.69px;top:288px;transform:scaleX(0.929);">2015 </span><span class="c" style="left:316.07px;top:288px;transform:scaleX(0.960);">18:</span><span class="c" style="left:334.08px;top:288px;transform:scaleX(0.932);">22</span><span class="c" style="left:348.08px;top:288px;transform:scaleX(1.026);">integracao</span><span class="c" style="left:412.79px;top:288px;transform:scaleX(1.020);">125/</span><span class="c" style="left:439.57px;top:288px;transform:scaleX(1.054);">04/</span><span class="c" style="left:459.36px;top:288px;transform:scaleX(0.929);">2016 </span><span class="c" style="left:490.75px;top:288px;transform:scaleX(0.960);">16:</span><span class="c" style="left:508.76px;top:288px;transform:scaleX(0.932);">28</span><span class="c" style="left:522.75px;top:288px;transform:scaleX(0.950);">ARQDIGITAL\</span><span class="c" style="left:603.99px;top:288px;transform:scaleX(1.099);">vitor.</span><span class="c" style="left:636.15px;top:288px;">santos</span><span class="c" style="left:675.88px;top:288px;transform:scaleX(0.960);">Sim</span><span class="c" style="left:698.19px;top:288px;transform:scaleX(0.960);">Sim</span><div style="left:29px;top:326px;width:951px;height:1px;background:#d4d4d4;"></div><div style="left:604px;top:307px;width:1px;height:20px;background:#d4d4d4;"></div><div style="left:668px;top:307px;width:1px;height:20px;background:#d4d4d4;"></div><div style="left:732px;top:307px;width:1px;height:20px;background:#d4d4d4;"></div><div style="left:796px;top:307px;width:1px;height:20px;background:#d4d4d4;"></div><div style="left:860px;top:307px;width:1px;height:20px;background:#d4d4d4;"></div><div style="left:924px;top:307px;width:1px;height:20px;background:#d4d4d4;"></div><div style="left:988px;top:307px;width:1px;height:20px;background:#d4d4d4;"></div><span class="c" style="left:31.00px;top:308px;transform:scaleX(0.954);">05-</span><span class="c" style="left:49.62px;top:308px;transform:scaleX(0.997);">Lixeira</span><span class="c" style="left:89.25px;top:308px;transform:scaleX(0.970);">85742303/</span><span class="c" style="left:151.15px;top:308px;transform:scaleX(1.056);">11/</span><span class="c" style="left:170.98px;top:308px;transform:scaleX(0.931);">2015 </span><span class="c" style="left:202.42px;top:308px;transform:scaleX(0.961);">18:</span><span class="c" style="left:220.46px;top:308px;transform:scaleX(0.934);">22</span><span class="c" style="left:234.49px;top:308px;transform:scaleX(1.018);">ADMIN</span><span class="c" style="left:278.75px;top:308px;transform:scaleX(1.056);">26/</span><span class="c" style="left:298.58px;top:308px;transform:scaleX(1.056);">04/</span><span class="c" style="left:318.41px;top:308px;transform:scaleX(0.931);">2016 </span><span class="c" style="left:349.85px;top:308px;transform:scaleX(0.961);">13:</span><span class="c" style="left:367.89px;top:308px;transform:scaleX(0.934);">08</span><span class="c" style="left:381.92px;top:308px;transform:scaleX(0.952);">ARQDIGITAL\</span><span class="c" style="left:463.31px;top:308px;transform:scaleX(1.101);">vitor.</span><span class="c" style="left:495.53px;top:308px;">santos</span><span class="c" style="left:535.33px;top:308px;">Não</span><span class="c" style="left:560.15px;top:308px;transform:scaleX(0.961);">Sim</span><div style="left:29px;top:346px;width:951px;height:1px;background:#d4d4d4;"></div><div style="left:860px;top:327px;width:1px;height:20px;background:#d4d4d4;"></div><div style="left:924px;top:327px;width:1px;height:20px;background:#d4d4d4;"></div><div style="left:988px;top:327px;width:1px;height:20px;background:#d4d4d4;"></div><span class="c" style="left:31.00px;top:328px;transform:scaleX(0.954);">04-</span><span class="c" style="left:49.61px;top:328px;transform:scaleX(0.959);">Relação </span><span class="c" style="left:100.73px;top:328px;">de </span><span class="c" style="left:119.49px;top:328px;transform:scaleX(1.006);">descarte, </span><span class="c" style="left:179.15px;top:328px;transform:scaleX(1.017);">quitação e </span><span class="c" style="left:246.32px;top:328px;transform:scaleX(1.026);">cancelamento</span><span class="c" style="left:332.52px;top:328px;transform:scaleX(0.969);">85742003/</span><span class="c" style="left:394.38px;top:328px;transform:scaleX(1.056);">11/</span><span class="c" style="left:414.20px;top:328px;transform:scaleX(0.930);">2015 </span><span class="c" style="left:445.62px;top:328px;transform:scaleX(0.961);">18:</span><span class="c" style="left:463.66px;top:328px;transform:scaleX(0.933);">22</span><span class="c" style="left:477.67px;top:328px;transform:scaleX(1.017);">ADMIN</span><span class="c" style="left:521.92px;top:328px;transform:scaleX(1.056);">27/</span><span class="c" style="left:541.73px;top:328px;transform:scaleX(1.056);">11/</span><span class="c" style="left:561.55px;top:328px;transform:scaleX(0.930);">2015 </span><span class="c" style="left:592.97px;top:328px;transform:scaleX(0.961);">19:</span><span class="c" style="left:611.01px;top:328px;transform:scaleX(0.933);">34</span><span class="c" style="left:625.02px;top:328px;transform:scaleX(0.951);">ARQDIGITAL\</span><span class="c" style="left:706.37px;top:328px;transform:scaleX(1.101);">vitor.</span><span class="c" style="left:738.57px;top:328px;">santos</span><span class="c" style="left:778.35px;top:328px;">Não</span><span class="c" style="left:803.16px;top:328px;transform:scaleX(0.961);">Sim</span><div style="left:29px;top:366px;width:951px;height:1px;background:#d4d4d4;"></div><div style="left:796px;top:347px;width:1px;height:20px;background:#d4d4d4;"></div><div style="left:860px;top:347px;width:1px;height:20px;background:#d4d4d4;"></div><div style="left:924px;top:347px;width:1px;height:20px;background:#d4d4d4;"></div><div style="left:988px;top:347px;width:1px;height:20px;background:#d4d4d4;"></div><span class="c" style="left:31.00px;top:348px;transform:scaleX(0.956);">03-</span><span class="c" style="left:49.66px;top:348px;">Circular </span><span class="c" style="left:99.97px;top:348px;transform:scaleX(1.061);">Interna</span><span class="c" style="left:144.56px;top:348px;transform:scaleX(0.972);">85741903/</span><span class="c" style="left:206.56px;top:348px;transform:scaleX(1.058);">11/</span><span class="c" style="left:226.42px;top:348px;transform:scaleX(0.932);">2015 </span><span class="c" style="left:257.92px;top:348px;transform:scaleX(0.963);">18:</span><span class="c" style="left:275.99px;top:348px;transform:scaleX(0.935);">22</span><span class="c" style="left:290.04px;top:348px;transform:scaleX(0.953);">ARQDIGITAL\</span><span class="c" style="left:371.57px;top:348px;transform:scaleX(1.024);">diego.</span><span class="c" style="left:409.24px;top:348px;transform:scaleX(1.023);">silveira</span><span class="c" style="left:452.23px;top:348px;transform:scaleX(1.058);">25/</span><span class="c" style="left:472.09px;top:348px;transform:scaleX(1.058);">01/</span><span class="c" style="left:491.95px;top:348px;transform:scaleX(0.932);">2016 </span><span class="c" style="left:523.45px;top:348px;transform:scaleX(0.963);">16:</span><span class="c" style="left:541.52px;top:348px;transform:scaleX(0.935);">35</span><span class="c" style="left:555.57px;top:348px;transform:scaleX(0.953);">ARQDIGITAL\</span><span class="c" style="left:637.10px;top:348px;transform:scaleX(1.103);">vitor.</span><span class="c" style="left:669.38px;top:348px;">santos</span><span class="c" style="left:709.25px;top:348px;transform:scaleX(1.004);">Não</span><span class="c" style="left:734.11px;top:348px;transform:scaleX(0.963);">Sim</span><div style="left:29px;top:386px;width:951px;height:1px;background:#d4d4d4;"></div><div style="left:796px;top:367px;width:1px;height:20px;background:#d4d4d4;"></div><div style="left:860px;top:367px;width:1px;height:20px;background:#d4d4d4;"></div><div style="left:924px;top:367px;width:1px;height:20px;background:#d4d4d4;"></div><div style="left:988px;top:367px;width:1px;height:20px;background:#d4d4d4;"></div><span class="c" style="left:31.00px;top:368px;transform:scaleX(0.956);">02-</span><span class="c" style="left:49.65px;top:368px;transform:scaleX(1.004);">Processamento</span><span class="c" style="left:143.83px;top:368px;transform:scaleX(0.971);">85718603/</span><span class="c" style="left:205.82px;top:368px;transform:scaleX(1.058);">11/</span><span class="c" style="left:225.67px;top:368px;transform:scaleX(0.932);">2015 </span><span class="c" style="left:257.17px;top:368px;transform:scaleX(0.963);">18:</span><span class="c" style="left:275.24px;top:368px;transform:scaleX(0.935);">22</span><span class="c" style="left:289.28px;top:368px;transform:scaleX(0.953);">ARQDIGITAL\</span><span class="c" style="left:370.80px;top:368px;transform:scaleX(1.029);">valdineia.</span><span class="c" style="left:429.47px;top:368px;transform:scaleX(0.967);">sousa</span><span class="c" style="left:464.29px;top:368px;transform:scaleX(1.058);">28/</span><span class="c" style="left:484.14px;top:368px;transform:scaleX(1.058);">12/</span><span class="c" style="left:504.00px;top:368px;transform:scaleX(0.932);">2015 </span><span class="c" style="left:535.49px;top:368px;transform:scaleX(0.963);">17:</span><span class="c" style="left:553.56px;top:368px;transform:scaleX(0.935);">15</span><span class="c" style="left:567.61px;top:368px;transform:scaleX(0.953);">ARQDIGITAL\</span><span class="c" style="left:649.12px;top:368px;transform:scaleX(1.103);">vitor.</span><span class="c" style="left:681.39px;top:368px;">santos</span><span class="c" style="left:721.25px;top:368px;transform:scaleX(1.004);">Não</span><span class="c" style="left:746.11px;top:368px;transform:scaleX(0.963);">Sim</span><div style="left:29px;top:406px;width:951px;height:1px;background:#d4d4d4;"></div><div style="left:732px;top:387px;width:1px;height:20px;background:#d4d4d4;"></div><div style="left:796px;top:387px;width:1px;height:20px;background:#d4d4d4;"></div><div style="left:860px;top:387px;width:1px;height:20px;background:#d4d4d4;"></div><div style="left:924px;top:387px;width:1px;height:20px;background:#d4d4d4;"></div><div style="left:988px;top:387px;width:1px;height:20px;background:#d4d4d4;"></div><span class="c" style="left:31.00px;top:388px;transform:scaleX(0.954);">01-</span><span class="c" style="left:49.61px;top:388px;transform:scaleX(1.045);">Arquivo</span><span class="c" style="left:97.44px;top:388px;transform:scaleX(0.969);">85695703/</span><span class="c" style="left:159.29px;top:388px;transform:scaleX(1.056);">11/</span><span class="c" style="left:179.10px;top:388px;transform:scaleX(0.930);">2015 </span><span class="c" style="left:210.51px;top:388px;transform:scaleX(0.961);">18:</span><span class="c" style="left:228.54px;top:388px;transform:scaleX(0.933);">22</span><span class="c" style="left:242.55px;top:388px;transform:scaleX(0.951);">ARQDIGITAL\</span><span class="c" style="left:323.87px;top:388px;transform:scaleX(1.037);">rafael.</span><span class="c" style="left:362.77px;top:388px;transform:scaleX(1.024);">amaral</span><span class="c" style="left:405.01px;top:388px;transform:scaleX(1.056);">11/</span><span class="c" style="left:424.82px;top:388px;transform:scaleX(1.056);">02/</span><span class="c" style="left:444.63px;top:388px;transform:scaleX(0.930);">2016 </span><span class="c" style="left:476.05px;top:388px;transform:scaleX(0.961);">13:</span><span class="c" style="left:494.08px;top:388px;transform:scaleX(0.933);">32</span><span class="c" style="left:508.09px;top:388px;transform:scaleX(0.951);">ARQDIGITAL\</span><span class="c" style="left:589.41px;top:388px;transform:scaleX(1.100);">vitor.</span><span class="c" style="left:621.60px;top:388px;">santos</span><span class="c" style="left:661.37px;top:388px;">Não</span><span class="c" style="left:686.17px;top:388px;transform:scaleX(0.961);">Sim</span></div><div style="left:3px;top:397px;width:970px;height:10px;overflow:hidden"><div style="left:1px;top:10px;width:980px;height:20px;box-shadow:0 0 3px 0 rgba(0,0,0,0.45)"></div></div><div class="w" style="left:2px;top:405px;width:971px;height:473px"><div style="left:2px;top:2px;width:980px;height:900px;background:#217346;"></div><div style="left:3px;top:2px;width:980px;height:66px;background:#217346;"></div><div style="left:3px;top:68px;width:980px;height:92px;background:#f1f1f1;"></div><div style="left:3px;top:160px;width:980px;height:1px;background:#dadada;"></div><div style="left:3px;top:161px;width:980px;height:46px;background:#e6e6e6;"></div><span class="t" style="left:558.90px;top:9px;font-size:12.5px;color:#ffffff;transform:scaleX(0.954);">Meu </span><span class="t" style="left:585.79px;top:9px;font-size:12.5px;color:#ffffff;transform:scaleX(0.960);">Conteúdo </span><span class="t" style="left:642.35px;top:9px;font-size:12.5px;color:#ffffff;transform:scaleX(0.904);">de </span><span class="t" style="left:658.03px;top:9px;font-size:12.5px;color:#ffffff;transform:scaleX(0.918);">Lista </span><span class="t" style="left:685.13px;top:9px;font-size:12.5px;color:#ffffff;transform:scaleX(0.925);">Exportado-1  </span><span class="t" style="left:755.42px;top:9px;font-size:12.5px;color:#ffffff;transform:scaleX(0.932);">[Somente </span><span class="t" style="left:809.01px;top:9px;font-size:12.5px;color:#ffffff;transform:scaleX(0.940);">leitura] </span><span class="t" style="left:849.29px;top:9px;font-size:12.5px;color:#ffffff;transform:scaleX(0.960);">- </span><span class="t" style="left:857.15px;top:9px;font-size:12.5px;color:#ffffff;transform:scaleX(0.904);">Excel</span><svg style="left:25px;top:13px;" width="14" height="14" viewBox="0 0 14 14"><rect x="0" y="0" width="14" height="14" rx="1" fill="#fff"/><path d="M2 1H12V6L11 7H3L2 6Z" fill="#217346"/><path d="M3 9H11V13H7V11H5V13H3Z" fill="#217346"/></svg><svg style="left:54px;top:12px;" width="14" height="14" viewBox="0 0 14 14"><path d="M1.4 5H8.3A4.1 4.1 0 0 1 8.3 13.2H7" fill="none" stroke="#5a9a77" stroke-width="2"/><path d="M5.8 0.8L1.5 5L5.8 9.2" fill="none" stroke="#5a9a77" stroke-width="2"/></svg><svg style="left:74px;top:18px;" width="5.4" height="3.2" viewBox="0 0 5.4 3.2"><path d="M0 0H5.4L2.7 3.2Z" fill="#5a9a77"/></svg><svg style="left:89px;top:12px;" width="14" height="14" viewBox="0 0 14 14"><path d="M12.6 5H5.7A4.1 4.1 0 0 0 5.7 13.2H7" fill="none" stroke="#5a9a77" stroke-width="2"/><path d="M8.2 0.8L12.5 5L8.2 9.2" fill="none" stroke="#5a9a77" stroke-width="2"/></svg><svg style="left:109px;top:18px;" width="5.4" height="3.2" viewBox="0 0 5.4 3.2"><path d="M0 0H5.4L2.7 3.2Z" fill="#5a9a77"/></svg><svg style="left:128px;top:17px;" width="5" height="7" viewBox="0 0 5 7"><rect x="0" y="0" width="5.2" height="1.3" fill="#fff"/><path d="M-0.2 3H5.4L2.6 6.4Z" fill="#fff"/></svg><div style="left:65px;top:38px;width:97px;height:30px;background:#f1f1f1;"></div><span class="t" style="left:12.25px;top:43px;font-size:12.5px;color:#ffffff;transform:scaleX(0.994);">Arquivo</span><span class="t" style="left:176.31px;top:43px;font-size:12.5px;color:#ffffff;transform:scaleX(0.943);">Inserir</span><span class="t" style="left:357.69px;top:43px;font-size:12.5px;color:#ffffff;transform:scaleX(0.956);">Fórmulas</span><span class="t" style="left:435.62px;top:43px;font-size:12.5px;color:#ffffff;transform:scaleX(0.933);">Dados</span><span class="t" style="left:497.45px;top:43px;font-size:12.5px;color:#ffffff;transform:scaleX(0.899);">Revisão</span><span class="t" style="left:566.53px;top:43px;font-size:12.5px;color:#ffffff;transform:scaleX(0.922);">Exibir</span><span class="t" style="left:623.40px;top:43px;font-size:12.5px;color:#ffffff;transform:scaleX(0.947);">Laserfiche</span><span class="t" style="left:77.73px;top:43px;font-size:12.5px;color:#217346;transform:scaleX(0.922);">Página </span><span class="t" style="left:117.47px;top:43px;font-size:12.5px;color:#217346;transform:scaleX(0.977);">Inicial</span><span class="t" style="left:237.78px;top:43px;font-size:12.5px;color:#ffffff;transform:scaleX(0.973);">Layout </span><span class="t" style="left:277.33px;top:43px;font-size:12.5px;color:#ffffff;transform:scaleX(0.919);">da </span><span class="t" style="left:293.03px;top:43px;font-size:12.5px;color:#ffffff;transform:scaleX(0.922);">Página</span><span class="t" style="left:722.90px;top:43px;font-size:12.5px;color:#ffffff;transform:scaleX(0.950);">Diga-me </span><span class="t" style="left:771.90px;top:43px;font-size:12.5px;color:#ffffff;transform:scaleX(0.950);">o </span><span class="t" style="left:782.16px;top:43px;font-size:12.5px;color:#ffffff;transform:scaleX(0.895);">que </span><span class="t" style="left:805.25px;top:43px;font-size:12.5px;color:#ffffff;transform:scaleX(0.950);">você </span><span class="t" style="left:833.16px;top:43px;font-size:12.5px;color:#ffffff;transform:scaleX(0.895);">deseja </span><span class="t" style="left:868.95px;top:43px;font-size:12.5px;color:#ffffff;transform:scaleX(0.905);">fazer</span><svg style="left:706.6px;top:45px;" width="10" height="15" viewBox="0 0 10 15"><path d="M5 0.6A4.1 4.1 0 0 0 2.4 7.9C2.9 8.6 3.1 9.2 3.1 10.1H6.9C6.9 9.2 7.1 8.6 7.6 7.9A4.1 4.1 0 0 0 5 0.6Z" fill="none" stroke="#fff" stroke-width="1.15"/><path d="M2.8 11.8H7.2" stroke="#fff" stroke-width="1.3" fill="none"/><path d="M3.4 13.7H6.6" stroke="#fff" stroke-width="1" fill="none"/></svg><svg style="left:31px;top:76px;" width="28" height="30" viewBox="0 0 28 30"><rect x="0" y="3" width="24" height="25" rx="1.5" fill="#d8d4d8"/><rect x="5" y="1.5" width="14" height="5" rx="1" fill="#b4b0b4"/><rect x="9" y="0" width="6" height="4" rx="2" fill="#b4b0b4"/><rect x="11" y="1.5" width="2" height="2" fill="#e8e8e8"/><path d="M14.5 11.5H24L27.5 15V29.5H14.5Z" fill="#f6f3f6" stroke="#b9b5b9" stroke-width="1"/><path d="M24 11.5V15H27.5" fill="none" stroke="#b9b5b9" stroke-width="1"/></svg><span class="t" style="left:28.81px;top:107px;font-size:11.5px;color:#a6a6a6;transform:scaleX(1.044);">Colar</span><svg style="left:40px;top:131px;" width="5" height="3" viewBox="0 0 5 3"><path d="M0 0H5L2.5 3Z" fill="#b8b8b8"/></svg><svg style="left:68px;top:74px;" width="14" height="15" viewBox="0 0 14 15"><path d="M3 0.5L10.2 10.5M11 0.5L3.8 10.5" stroke="#555" stroke-width="1.7" fill="none"/><circle cx="2.8" cy="12" r="2.3" fill="none" stroke="#3b7fc4" stroke-width="1.1"/><circle cx="11.2" cy="12" r="2.3" fill="none" stroke="#3b7fc4" stroke-width="1.1"/></svg><svg style="left:67px;top:98px;" width="16" height="14" viewBox="0 0 16 14"><path d="M0.5 0.5H5.5L8.5 3.5V10.5H0.5Z" fill="#fff" stroke="#555"/><path d="M2 4.5H6M2 6.5H6M2 8.5H5" stroke="#3b7fc4" fill="none"/><path d="M6.5 3.5H11.5L14.5 6.5V13.5H6.5Z" fill="#fff" stroke="#555"/><path d="M8.5 8.5H12.5M8.5 10.5H12.5M8.5 11.9H12.5" stroke="#3b7fc4" fill="none"/></svg><svg style="left:89px;top:104px;" width="5.4" height="3.3" viewBox="0 0 5.4 3.3"><path d="M0 0H5.4L2.7 3.3Z" fill="#666666"/></svg><svg style="left:67px;top:121px;" width="16" height="14" viewBox="0 0 16 14"><path d="M0 7L7 4L11 9.5L6.5 14Z" fill="#e8b96a"/><path d="M7 4L9.5 2L13 7L11 9.5Z" fill="#555"/><path d="M10.5 2.5L14 0L16 2.5L12.8 5.5Z" fill="#666"/></svg><span class="t" style="left:7.45px;top:142px;font-size:11.5px;color:#5e5e5e;transform:scaleX(0.923);">Área </span><span class="t" style="left:33.55px;top:142px;font-size:11.5px;color:#5e5e5e;transform:scaleX(0.885);">de </span><span class="t" style="left:49.55px;top:142px;font-size:11.5px;color:#5e5e5e;transform:scaleX(0.938);">Transfer...</span><svg style="left:107px;top:149px;" width="7" height="7" viewBox="0 0 7 7"><path d="M0.5 4V0.5H4" fill="none" stroke="#777" stroke-width="1"/><path d="M3 3L6 6M6.5 3.5V6.5H3.5" fill="none" stroke="#777" stroke-width="1"/></svg><div style="left:118px;top:72px;width:1px;height:84px;background:#d4d4d4;"></div><div style="left:123px;top:79px;width:111px;height:23px;background:#fff;border:1px solid #c6c6c6;box-sizing:border-box;"></div><span class="t" style="left:125.48px;top:81px;font-size:11.5px;transform:scaleX(1.066);">Calibri</span><svg style="left:224px;top:89px;" width="5.5" height="3.3" viewBox="0 0 5.5 3.3"><path d="M0 0H5.5L2.75 3.3Z" fill="#666666"/></svg><div style="left:234px;top:79px;width:43px;height:23px;background:#fff;border:1px solid #c6c6c6;box-sizing:border-box;"></div><span class="t" style="left:237.10px;top:81px;font-size:11.5px;transform:scaleX(0.955);">11</span><svg style="left:266.8px;top:89px;" width="5.5" height="3.3" viewBox="0 0 5.5 3.3"><path d="M0 0H5.5L2.75 3.3Z" fill="#666666"/></svg><span class="t" style="left:283.55px;top:82px;font-size:13.8px;color:#4a4a4a;">A</span><svg style="left:291px;top:83px;" width="5.4" height="3" viewBox="0 0 5.4 3"><path d="M0 3H5.4L2.7 0Z" fill="#2e75b6"/></svg><span class="t" style="left:306.35px;top:82px;font-size:11px;color:#4a4a4a;">A</span><svg style="left:313px;top:83px;" width="5.4" height="3" viewBox="0 0 5.4 3"><path d="M0 0H5.4L2.7 3Z" fill="#2e75b6"/></svg><span class="t" style="left:128.86px;top:111px;font-size:12.5px;color:#444;transform:scaleX(1.193);font-weight:bold;">N</span><span class="t" style="left:152.45px;top:110px;font-size:14.5px;color:#444;font-weight:bold;font-style:italic;font-family:'Liberation Serif', serif;">I</span><span class="t" style="left:173.79px;top:111px;font-size:12.5px;color:#444;transform:scaleX(0.964);font-weight:bold;">S</span><div style="left:174px;top:126px;width:8px;height:1px;background:#444;"></div><svg style="left:191.7px;top:120px;" width="5.4" height="3.3" viewBox="0 0 5.4 3.3"><path d="M0 0H5.4L2.7 3.3Z" fill="#666666"/></svg><div style="left:205px;top:110px;width:1px;height:22px;background:#d4d4d4;"></div><svg style="left:214px;top:114px;" width="14" height="14" viewBox="0 0 14 14"><rect x="0" y="0" width="1" height="1" fill="#777"/><rect x="2" y="0" width="1" height="1" fill="#777"/><rect x="4" y="0" width="1" height="1" fill="#777"/><rect x="6" y="0" width="1" height="1" fill="#777"/><rect x="8" y="0" width="1" height="1" fill="#777"/><rect x="10" y="0" width="1" height="1" fill="#777"/><rect x="12" y="0" width="1" height="1" fill="#777"/><rect x="0" y="6" width="1" height="1" fill="#777"/><rect x="2" y="6" width="1" height="1" fill="#777"/><rect x="4" y="6" width="1" height="1" fill="#777"/><rect x="6" y="6" width="1" height="1" fill="#777"/><rect x="8" y="6" width="1" height="1" fill="#777"/><rect x="10" y="6" width="1" height="1" fill="#777"/><rect x="12" y="6" width="1" height="1" fill="#777"/><rect x="0" y="0" width="1" height="1" fill="#777"/><rect x="0" y="2" width="1" height="1" fill="#777"/><rect x="0" y="4" width="1" height="1" fill="#777"/><rect x="0" y="6" width="1" height="1" fill="#777"/><rect x="0" y="8" width="1" height="1" fill="#777"/><rect x="0" y="10" width="1" height="1" fill="#777"/><rect x="6" y="0" width="1" height="1" fill="#777"/><rect x="6" y="2" width="1" height="1" fill="#777"/><rect x="6" y="4" width="1" height="1" fill="#777"/><rect x="6" y="6" width="1" height="1" fill="#777"/><rect x="6" y="8" width="1" height="1" fill="#777"/><rect x="6" y="10" width="1" height="1" fill="#777"/><rect x="12" y="0" width="1" height="1" fill="#777"/><rect x="12" y="2" width="1" height="1" fill="#777"/><rect x="12" y="4" width="1" height="1" fill="#777"/><rect x="12" y="6" width="1" height="1" fill="#777"/><rect x="12" y="8" width="1" height="1" fill="#777"/><rect x="12" y="10" width="1" height="1" fill="#777"/><rect x="0" y="12" width="13" height="1.4" fill="#555"/></svg><svg style="left:235px;top:120px;" width="5.4" height="3.3" viewBox="0 0 5.4 3.3"><path d="M0 0H5.4L2.7 3.3Z" fill="#666666"/></svg><div style="left:248px;top:110px;width:1px;height:22px;background:#d4d4d4;"></div><svg style="left:256px;top:112px;" width="17" height="17" viewBox="0 0 17 17"><path d="M7.2 3.2L13 9L8 13.2L2.6 8Z" fill="#fff" stroke="#555" stroke-width="1"/><path d="M5.5 4.5V1.8Q5.5 0.8 6.5 0.8Q7.6 0.8 7.6 1.8V5" stroke="#555" fill="none"/><path d="M13.3 5C15.5 7 16.3 9 16 11L13.3 12.3C14.5 10 14.3 8 12.5 6Z" fill="#3b7fc4"/><rect x="0" y="13" width="16" height="4" fill="#ffff00"/></svg><svg style="left:278px;top:120px;" width="5.4" height="3.3" viewBox="0 0 5.4 3.3"><path d="M0 0H5.4L2.7 3.3Z" fill="#666666"/></svg><span class="t" style="left:293.55px;top:110px;font-size:14px;color:#4a4a4a;">A</span><div style="left:290px;top:125px;width:16px;height:4px;background:#ff0000;"></div><svg style="left:312px;top:120px;" width="5.4" height="3.3" viewBox="0 0 5.4 3.3"><path d="M0 0H5.4L2.7 3.3Z" fill="#666666"/></svg><span class="t" style="left:199.04px;top:142px;font-size:11.5px;color:#5e5e5e;transform:scaleX(1.012);">Fonte</span><svg style="left:314px;top:149px;" width="7" height="7" viewBox="0 0 7 7"><path d="M0.5 4V0.5H4" fill="none" stroke="#777" stroke-width="1"/><path d="M3 3L6 6M6.5 3.5V6.5H3.5" fill="none" stroke="#777" stroke-width="1"/></svg><div style="left:325px;top:72px;width:1px;height:84px;background:#d4d4d4;"></div><div style="left:374px;top:79px;width:22px;height:23px;background:#c6c6c6;"></div><svg style="left:334px;top:80px;" width="16" height="16" viewBox="0 0 16 16"><rect x="0" y="2" width="14" height="1" fill="#6a6a6a"/><rect x="0" y="5" width="14" height="1" fill="#6a6a6a"/><rect x="0" y="8" width="14" height="1" fill="#6a6a6a"/></svg><svg style="left:356px;top:80px;" width="16" height="16" viewBox="0 0 16 16"><rect x="0" y="6" width="14" height="1" fill="#6a6a6a"/><rect x="0" y="9" width="14" height="1" fill="#6a6a6a"/><rect x="0" y="12" width="14" height="1" fill="#6a6a6a"/></svg><svg style="left:378px;top:80px;" width="16" height="16" viewBox="0 0 16 16"><rect x="0" y="11" width="14" height="1" fill="#6a6a6a"/><rect x="0" y="14" width="14" height="1" fill="#6a6a6a"/><rect x="0" y="17" width="14" height="1" fill="#6a6a6a"/></svg><div style="left:400px;top:79px;width:1px;height:23px;background:#d4d4d4;"></div><svg style="left:408px;top:81px;" width="18" height="17" viewBox="0 0 18 17"><text x="2.3" y="11.6" font-size="10.5" fill="#444" transform="rotate(-42 2.3 11.6)" font-family="Liberation Sans, sans-serif" letter-spacing="-0.3">ab</text><path d="M6.6 15.2L15.2 7M11.6 6.8L15.5 6.6L15.4 10.4" stroke="#555" fill="none" stroke-width="1.1"/></svg><svg style="left:428px;top:88px;" width="5.4" height="3.3" viewBox="0 0 5.4 3.3"><path d="M0 0H5.4L2.7 3.3Z" fill="#666666"/></svg><svg style="left:334px;top:114px;" width="16" height="16" viewBox="0 0 16 16"><rect x="0" y="2" width="14" height="1" fill="#6a6a6a"/><rect x="0" y="5" width="10" height="1" fill="#6a6a6a"/><rect x="0" y="8" width="14" height="1" fill="#6a6a6a"/><rect x="0" y="11" width="10" height="1" fill="#6a6a6a"/></svg><svg style="left:356px;top:114px;" width="16" height="16" viewBox="0 0 16 16"><rect x="0" y="2" width="14" height="1" fill="#6a6a6a"/><rect x="2" y="5" width="10" height="1" fill="#6a6a6a"/><rect x="0" y="8" width="14" height="1" fill="#6a6a6a"/><rect x="2" y="11" width="10" height="1" fill="#6a6a6a"/></svg><svg style="left:378px;top:114px;" width="16" height="16" viewBox="0 0 16 16"><rect x="0" y="2" width="14" height="1" fill="#6a6a6a"/><rect x="4" y="5" width="10" height="1" fill="#6a6a6a"/><rect x="0" y="8" width="14" height="1" fill="#6a6a6a"/><rect x="4" y="11" width="10" height="1" fill="#6a6a6a"/></svg><div style="left:400px;top:110px;width:1px;height:22px;background:#d4d4d4;"></div><svg style="left:408px;top:114px;" width="16" height="14" viewBox="0 0 16 14"><path d="M0 0.5H16M8.3 3.5H16M8.3 6.5H16M8.3 9.5H16M0 12.5H16" stroke="#6a6a6a" fill="none"/><path d="M6.8 6.5H1M3.6 3.7L0.8 6.5L3.6 9.3" stroke="#3b7fc4" stroke-width="1.7" fill="none"/></svg><svg style="left:430px;top:114px;" width="16" height="14" viewBox="0 0 16 14"><path d="M0 0.5H16M8.3 3.5H16M8.3 6.5H16M8.3 9.5H16M0 12.5H16" stroke="#6a6a6a" fill="none"/><path d="M0 6.5H5.8M3.2 3.7L6 6.5L3.2 9.3" stroke="#3b7fc4" stroke-width="1.7" fill="none"/></svg><div style="left:453px;top:79px;width:1px;height:53px;background:#dcdcdc;"></div><svg style="left:461px;top:82px;" width="17" height="15" viewBox="0 0 17 15"><path d="M0.5 0.5H9.5V4.5H0.5ZM0.5 6.5H9.5V14.5H0.5Z" fill="#f8f8f8" stroke="#777"/><path d="M2.5 2.5H14M2.5 9.5H8M2.5 11.5H8" stroke="#3b7fc4" fill="none"/><path d="M15.8 5.2C16.2 8.2 14.5 9.8 11 9.8M13 7.6L10.6 9.8L13 12" stroke="#3b7fc4" fill="none" stroke-width="1.1"/></svg><span class="t" style="left:479.71px;top:81px;font-size:11.5px;transform:scaleX(1.040);">Quebrar </span><span class="t" style="left:527.45px;top:81px;font-size:11.5px;transform:scaleX(0.957);">Texto </span><span class="t" style="left:557.65px;top:81px;font-size:11.5px;transform:scaleX(1.072);">Automaticamente</span><svg style="left:461px;top:113px;" width="16" height="16" viewBox="0 0 16 16"><path d="M0.5 0.5H14.5V14.5H0.5Z" fill="#f8f8f8" stroke="#777"/><path d="M0.5 3.5H14.5M0.5 11.5H14.5M7.5 0.5V3.5M7.5 11.5V14.5" stroke="#777" fill="none"/><path d="M2.5 7.5H12.5M4.3 5.7L2.5 7.5L4.3 9.3M10.7 5.7L12.5 7.5L10.7 9.3" stroke="#3b7fc4" fill="none"/></svg><span class="t" style="left:479.72px;top:112px;font-size:11.5px;transform:scaleX(1.027);">Mesclar </span><span class="t" style="left:524.95px;top:112px;font-size:11.5px;transform:scaleX(0.867);">e </span><span class="t" style="left:532.83px;top:112px;font-size:11.5px;transform:scaleX(1.019);">Centralizar</span><svg style="left:598.8px;top:120px;" width="5.4" height="3.3" viewBox="0 0 5.4 3.3"><path d="M0 0H5.4L2.7 3.3Z" fill="#666666"/></svg><span class="t" style="left:454.25px;top:142px;font-size:11.5px;color:#5e5e5e;transform:scaleX(1.020);">Alinhamento</span><svg style="left:653px;top:149px;" width="7" height="7" viewBox="0 0 7 7"><path d="M0.5 4V0.5H4" fill="none" stroke="#777" stroke-width="1"/><path d="M3 3L6 6M6.5 3.5V6.5H3.5" fill="none" stroke="#777" stroke-width="1"/></svg><div style="left:664px;top:72px;width:1px;height:84px;background:#d4d4d4;"></div><div style="left:669px;top:79px;width:131px;height:23px;background:#fff;border:1px solid #c6c6c6;box-sizing:border-box;"></div><span class="t" style="left:671.76px;top:81px;font-size:11.5px;transform:scaleX(0.990);">Geral</span><svg style="left:790px;top:89px;" width="5.5" height="3.3" viewBox="0 0 5.5 3.3"><path d="M0 0H5.5L2.75 3.3Z" fill="#666666"/></svg><svg style="left:672px;top:112px;" width="17" height="18" viewBox="0 0 17 18"><rect x="1" y="1.8" width="14.2" height="7.6" fill="#fff" stroke="#2e75b6" stroke-width="1.8"/><circle cx="8.3" cy="5.5" r="2.1" fill="#2e75b6"/><path d="M6 4.2H7.6" stroke="#fff" stroke-width="0.8"/><ellipse cx="12.3" cy="8.3" rx="3.8" ry="1.5" fill="#f3cf8d" stroke="#e0a958" stroke-width="0.7"/><ellipse cx="12.3" cy="10.6" rx="3.8" ry="1.5" fill="#f3cf8d" stroke="#e0a958" stroke-width="0.7"/><ellipse cx="12.3" cy="12.8" rx="3.8" ry="1.5" fill="#f3cf8d" stroke="#e0a958" stroke-width="0.7"/><ellipse cx="7.8" cy="13" rx="3.8" ry="1.5" fill="#f3cf8d" stroke="#e0a958" stroke-width="0.7"/><ellipse cx="7.8" cy="15.3" rx="3.8" ry="1.5" fill="#f3cf8d" stroke="#e0a958" stroke-width="0.7"/></svg><svg style="left:694px;top:120px;" width="5.4" height="3.3" viewBox="0 0 5.4 3.3"><path d="M0 0H5.4L2.7 3.3Z" fill="#666666"/></svg><span class="t" style="left:707.51px;top:112px;font-size:15.2px;transform:scaleX(1.038);">%</span><span class="t" style="left:729.05px;top:110px;font-size:10.6px;transform:scaleX(0.838);">000</span><div style="left:751px;top:110px;width:1px;height:22px;background:#d4d4d4;"></div><svg style="left:758px;top:113px;" width="16" height="16" viewBox="0 0 16 16"><path d="M1.2 4.3H7.2M3.8 1.8L1.2 4.3L3.8 6.8" stroke="#3b7fc4" stroke-width="1.4" fill="none"/><text x="10" y="6.6" font-size="9" font-family="Liberation Sans, sans-serif" fill="#444" textLength="4.6" lengthAdjust="spacingAndGlyphs">0</text><text x="2.6" y="14" font-size="9" font-family="Liberation Sans, sans-serif" fill="#444" textLength="12" lengthAdjust="spacingAndGlyphs">,00</text></svg><svg style="left:780px;top:113px;" width="16" height="16" viewBox="0 0 16 16"><text x="3" y="6.6" font-size="9" font-family="Liberation Sans, sans-serif" fill="#444" textLength="12" lengthAdjust="spacingAndGlyphs">,00</text><path d="M0.6 11.3H6.6M4 8.8L6.6 11.3L4 13.8" stroke="#3b7fc4" stroke-width="1.4" fill="none"/><text x="8" y="14" font-size="9" font-family="Liberation Sans, sans-serif" fill="#444" textLength="7.5" lengthAdjust="spacingAndGlyphs">,0</text></svg><span class="t" style="left:705.24px;top:142px;font-size:11.5px;color:#5e5e5e;transform:scaleX(1.006);">Número</span><svg style="left:793px;top:149px;" width="7" height="7" viewBox="0 0 7 7"><path d="M0.5 4V0.5H4" fill="none" stroke="#777" stroke-width="1"/><path d="M3 3L6 6M6.5 3.5V6.5H3.5" fill="none" stroke="#777" stroke-width="1"/></svg><div style="left:804px;top:72px;width:1px;height:84px;background:#d4d4d4;"></div><svg style="left:833px;top:76px;" width="30" height="30" viewBox="0 0 30 30"><rect x="0.5" y="0.5" width="27" height="24" fill="#fff" stroke="#8c8c8c"/><path d="M0.5 6.5H27.5M0.5 12.5H27.5M0.5 18.5H27.5M7.5 0.5V24.5M20.5 0.5V24.5" stroke="#b4b4b4" fill="none"/><rect x="8" y="1" width="6" height="5" fill="#d9623b"/><rect x="8" y="7" width="11" height="5" fill="#4a86c5"/><rect x="8" y="13" width="9" height="5" fill="#d9623b"/><rect x="8" y="19" width="4" height="5" fill="#4a86c5"/><rect x="14.5" y="17.5" width="15" height="12" fill="#fff" stroke="#666"/><text x="17.8" y="27.5" font-size="12" fill="#333" font-family="Liberation Sans, sans-serif">≠</text></svg><span class="t" style="left:815.52px;top:107px;font-size:11.5px;transform:scaleX(1.033);">Formatação</span><span class="t" style="left:810.46px;top:123px;font-size:11.5px;transform:scaleX(1.094);">Condicional</span><svg style="left:878.3px;top:131px;" width="5.4" height="3.3" viewBox="0 0 5.4 3.3"><path d="M0 0H5.4L2.7 3.3Z" fill="#666666"/></svg><svg style="left:916px;top:78px;" width="31" height="29" viewBox="0 0 31 29"><rect x="0.5" y="0.5" width="24.5" height="20.5" fill="#fff" stroke="#8c8c8c"/><path d="M0.5 6.3H25M0.5 11.4H25M0.5 16.5H25M6.3 0.5V21M12.4 0.5V21M18.5 0.5V21" stroke="#a8a8a8" fill="none"/><rect x="6.8" y="7.8" width="5.2" height="4.2" fill="#bdd3ec"/><rect x="12.899999999999999" y="7.8" width="5.2" height="4.2" fill="#bdd3ec"/><rect x="19.0" y="7.8" width="5.2" height="4.2" fill="#bdd3ec"/><rect x="6.8" y="12.899999999999999" width="5.2" height="4.2" fill="#bdd3ec"/><rect x="12.899999999999999" y="12.899999999999999" width="5.2" height="4.2" fill="#bdd3ec"/><rect x="19.0" y="12.899999999999999" width="5.2" height="4.2" fill="#bdd3ec"/><rect x="6.8" y="18.0" width="5.2" height="4.2" fill="#bdd3ec"/><rect x="12.899999999999999" y="18.0" width="5.2" height="4.2" fill="#bdd3ec"/><rect x="19.0" y="18.0" width="5.2" height="4.2" fill="#bdd3ec"/><path d="M29.5 5.5L29.5 11L21.5 21.5L18 18.5Z" fill="#7a7a7a" stroke="#f1f1f1" stroke-width="0.8"/><path d="M6.5 28.5C10 26 11.5 22.5 14 20.5C16 19 19.5 20 19.6 23C19.6 26.5 15 28.8 6.5 28.5Z" fill="#3f7fc6"/><path d="M15.5 21.5C17 21 18.3 21.8 18.3 23.5" stroke="#fff" stroke-width="1.3" fill="none"/></svg><span class="t" style="left:888.02px;top:107px;font-size:11.5px;transform:scaleX(1.034);">Formatar </span><span class="t" style="left:940.15px;top:107px;font-size:11.5px;transform:scaleX(1.048);">como</span><span class="t" style="left:909.35px;top:123px;font-size:11.5px;transform:scaleX(0.954);">Tabela</span><svg style="left:945px;top:131px;" width="5.4" height="3.3" viewBox="0 0 5.4 3.3"><path d="M0 0H5.4L2.7 3.3Z" fill="#666666"/></svg><span class="t" style="left:904.08px;top:142px;font-size:11.5px;color:#5e5e5e;transform:scaleX(0.972);">Estilo</span><div style="left:8px;top:171px;width:102px;height:26px;background:#fff;border:1px solid #c6c6c6;box-sizing:border-box;"></div><span class="t" style="left:15.25px;top:175px;font-size:13px;transform:scaleX(0.941);">A1</span><svg style="left:96px;top:181px;" width="7" height="4" viewBox="0 0 7 4"><path d="M0 0H7L3.5 4Z" fill="#7a7a7a"/></svg><svg style="left:124px;top:179px;" width="2" height="10" viewBox="0 0 2 10"><rect x="0" y="0" width="1.5" height="1.5" fill="#999"/><rect x="0" y="4" width="1.5" height="1.5" fill="#999"/><rect x="0" y="8" width="1.5" height="1.5" fill="#999"/></svg><div style="left:140px;top:171px;width:110px;height:26px;background:#fff;border:1px solid #c6c6c6;box-sizing:border-box;"></div><svg style="left:153px;top:178.5px;" width="11" height="11" viewBox="0 0 11 11"><path d="M0.8 0.8L10.2 10.2M10.2 0.8L0.8 10.2" stroke="#bcbcbc" stroke-width="1.9" fill="none"/></svg><svg style="left:188.5px;top:178.5px;" width="14" height="11" viewBox="0 0 14 11"><path d="M1 5.8L4.8 9.6L12.6 1" stroke="#bcbcbc" stroke-width="2.1" fill="none"/></svg><span class="t" style="left:225.15px;top:173px;font-size:12.4px;color:#505050;transform:scaleX(1.670);font-style:italic;font-family:'Liberation Serif', serif;-webkit-text-stroke:0.3px #505050;">f</span><span class="t" style="left:230.65px;top:174px;font-size:10.8px;color:#505050;transform:scaleX(1.270);font-style:italic;font-family:'Liberation Serif', serif;-webkit-text-stroke:0.3px #505050;">x</span><div style="left:253px;top:171px;width:730px;height:26px;background:#fff;border:1px solid #c6c6c6;box-sizing:border-box;"></div><div style="left:254px;top:172px;width:730px;height:24px;overflow:hidden"><span class="c f" style="left:10.80px;top:3px;transform:scaleX(1.029);">Nome</span></div><div style="left:3px;top:207px;width:980px;height:20px;background:#e6e6e6;"></div><div style="left:29px;top:227px;width:950px;height:260px;background:#fff;"></div><div style="left:3px;top:227px;width:25px;height:260px;background:#e6e6e6;"></div><div style="left:29px;top:207px;width:63px;height:19px;background:#d2d2d2;"></div><div style="left:3px;top:227px;width:25px;height:19px;background:#d2d2d2;"></div><div style="left:3px;top:226px;width:980px;height:1px;background:#ababab;"></div><div style="left:28px;top:207px;width:1px;height:280px;background:#ababab;"></div><div style="left:92px;top:207px;width:1px;height:19px;background:#ababab;"></div><div style="left:156px;top:207px;width:1px;height:19px;background:#ababab;"></div><div style="left:220px;top:207px;width:1px;height:19px;background:#ababab;"></div><div style="left:284px;top:207px;width:1px;height:19px;background:#ababab;"></div><div style="left:348px;top:207px;width:1px;height:19px;background:#ababab;"></div><div style="left:412px;top:207px;width:1px;height:19px;background:#ababab;"></div><div style="left:476px;top:207px;width:1px;height:19px;background:#ababab;"></div><div style="left:540px;top:207px;width:1px;height:19px;background:#ababab;"></div><div style="left:604px;top:207px;width:1px;height:19px;background:#ababab;"></div><div style="left:668px;top:207px;width:1px;height:19px;background:#ababab;"></div><div style="left:732px;top:207px;width:1px;height:19px;background:#ababab;"></div><div style="left:796px;top:207px;width:1px;height:19px;background:#ababab;"></div><div style="left:860px;top:207px;width:1px;height:19px;background:#ababab;"></div><div style="left:924px;top:207px;width:1px;height:19px;background:#ababab;"></div><div style="left:988px;top:207px;width:1px;height:19px;background:#ababab;"></div><svg style="left:13px;top:211px;" width="12" height="12" viewBox="0 0 12 12"><path d="M12 0V12H0Z" fill="#b7b7b7"/></svg><span class="h" style="left:29px;top:207px;width:63px;color:#217346">A</span><span class="h" style="left:93px;top:207px;width:63px;color:#262626">B</span><span class="h" style="left:157px;top:207px;width:63px;color:#262626">C</span><span class="h" style="left:221px;top:207px;width:63px;color:#262626">D</span><span class="h" style="left:285px;top:207px;width:63px;color:#262626">E</span><span class="h" style="left:349px;top:207px;width:63px;color:#262626">F</span><span class="h" style="left:413px;top:207px;width:63px;color:#262626">G</span><span class="h" style="left:477px;top:207px;width:63px;color:#262626">H</span><span class="h" style="left:541px;top:207px;width:63px;color:#262626">I</span><span class="h" style="left:605px;top:207px;width:63px;color:#262626">J</span><span class="h" style="left:669px;top:207px;width:63px;color:#262626">K</span><span class="h" style="left:733px;top:207px;width:63px;color:#262626">L</span><span class="h" style="left:797px;top:207px;width:63px;color:#262626">M</span><span class="h" style="left:861px;top:207px;width:63px;color:#262626">N</span><span class="h" style="left:925px;top:207px;width:63px;color:#262626">O</span><span class="h n" style="left:3px;top:228px;width:25.5px;color:#217346">1</span><div style="left:3px;top:246px;width:25px;height:1px;background:#ababab;"></div><span class="h n" style="left:3px;top:248px;width:25.5px;color:#262626">2</span><div style="left:3px;top:266px;width:25px;height:1px;background:#ababab;"></div><span class="h n" style="left:3px;top:268px;width:25.5px;color:#262626">3</span><div style="left:3px;top:286px;width:25px;height:1px;background:#ababab;"></div><span class="h n" style="left:3px;top:288px;width:25.5px;color:#262626">4</span><div style="left:3px;top:306px;width:25px;height:1px;background:#ababab;"></div><span class="h n" style="left:3px;top:308px;width:25.5px;color:#262626">5</span><div style="left:3px;top:326px;width:25px;height:1px;background:#ababab;"></div><span class="h n" style="left:3px;top:328px;width:25.5px;color:#262626">6</span><div style="left:3px;top:346px;width:25px;height:1px;background:#ababab;"></div><span class="h n" style="left:3px;top:348px;width:25.5px;color:#262626">7</span><div style="left:3px;top:366px;width:25px;height:1px;background:#ababab;"></div><span class="h n" style="left:3px;top:368px;width:25.5px;color:#262626">8</span><div style="left:3px;top:386px;width:25px;height:1px;background:#ababab;"></div><span class="h n" style="left:3px;top:388px;width:25.5px;color:#262626">9</span><div style="left:3px;top:406px;width:25px;height:1px;background:#ababab;"></div><span class="h n" style="left:3px;top:408px;width:25.5px;color:#262626">10</span><div style="left:3px;top:426px;width:25px;height:1px;background:#ababab;"></div><span class="h n" style="left:3px;top:428px;width:25.5px;color:#262626">11</span><div style="left:3px;top:446px;width:25px;height:1px;background:#ababab;"></div><span class="h n" style="left:3px;top:448px;width:25.5px;color:#262626">12</span><div style="left:3px;top:466px;width:25px;height:1px;background:#ababab;"></div><span class="h n" style="left:3px;top:468px;width:25.5px;color:#262626">13</span><div style="left:3px;top:486px;width:25px;height:1px;background:#ababab;"></div><div style="left:29px;top:246px;width:951px;height:1px;background:#d4d4d4;"></div><div style="left:92px;top:227px;width:1px;height:20px;background:#d4d4d4;"></div><div style="left:156px;top:227px;width:1px;height:20px;background:#d4d4d4;"></div><div style="left:220px;top:227px;width:1px;height:20px;background:#d4d4d4;"></div><div style="left:284px;top:227px;width:1px;height:20px;background:#d4d4d4;"></div><div style="left:348px;top:227px;width:1px;height:20px;background:#d4d4d4;"></div><div style="left:412px;top:227px;width:1px;height:20px;background:#d4d4d4;"></div><div style="left:476px;top:227px;width:1px;height:20px;background:#d4d4d4;"></div><div style="left:540px;top:227px;width:1px;height:20px;background:#d4d4d4;"></div><div style="left:604px;top:227px;width:1px;height:20px;background:#d4d4d4;"></div><div style="left:668px;top:227px;width:1px;height:20px;background:#d4d4d4;"></div><div style="left:732px;top:227px;width:1px;height:20px;background:#d4d4d4;"></div><div style="left:860px;top:227px;width:1px;height:20px;background:#d4d4d4;"></div><div style="left:924px;top:227px;width:1px;height:20px;background:#d4d4d4;"></div><div style="left:988px;top:227px;width:1px;height:20px;background:#d4d4d4;"></div><div style="left:29px;top:227px;width:63px;height:19px;overflow:hidden"><span class="c" style="left:2.00px;top:1px;transform:scaleX(1.029);">Nome</span></div><div style="left:93px;top:227px;width:63px;height:19px;overflow:hidden"><span class="c" style="left:2.00px;top:1px;transform:scaleX(1.031);">Volume</span></div><div style="left:157px;top:227px;width:63px;height:19px;overflow:hidden"><span class="c" style="left:2.00px;top:1px;transform:scaleX(0.950);">Páginas</span></div><div style="left:221px;top:227px;width:63px;height:19px;overflow:hidden"><span class="c" style="left:2.00px;top:1px;transform:scaleX(0.990);">Status</span></div><div style="left:285px;top:227px;width:63px;height:19px;overflow:hidden"><span class="c" style="left:2.00px;top:1px;transform:scaleX(0.973);">Criados </span><span class="c" style="left:50.90px;top:1px;transform:scaleX(1.077);">por</span></div><div style="left:349px;top:227px;width:63px;height:19px;overflow:hidden"><span class="c" style="left:2.00px;top:1px;">Tamanho </span><span class="c" style="left:62.73px;top:1px;transform:scaleX(1.120);">total</span></div><div style="left:413px;top:227px;width:63px;height:19px;overflow:hidden"><span class="c" style="left:2.00px;top:1px;transform:scaleX(1.063);">Modificado</span></div><div style="left:477px;top:227px;width:63px;height:19px;overflow:hidden"><span class="c" style="left:2.00px;top:1px;transform:scaleX(1.026);">Confirma</span></div><div style="left:541px;top:227px;width:63px;height:19px;overflow:hidden"><span class="c" style="left:2.00px;top:1px;transform:scaleX(0.989);">Criado </span><span class="c" style="left:45.04px;top:1px;transform:scaleX(0.994);">Por</span></div><div style="left:605px;top:227px;width:63px;height:19px;overflow:hidden"><span class="c" style="left:2.00px;top:1px;transform:scaleX(1.014);">Etiquetas</span></div><div style="left:669px;top:227px;width:63px;height:19px;overflow:hidden"><span class="c" style="left:2.00px;top:1px;transform:scaleX(1.017);">Indexado</span></div><div style="left:733px;top:227px;width:319px;height:19px;overflow:hidden"><span class="c" style="left:2.00px;top:1px;transform:scaleX(0.992);">Data </span><span class="c" style="left:34.01px;top:1px;">de </span><span class="c" style="left:52.75px;top:1px;transform:scaleX(0.974);">Criação</span></div><div style="left:29px;top:266px;width:951px;height:1px;background:#d4d4d4;"></div><div style="left:92px;top:247px;width:1px;height:20px;background:#d4d4d4;"></div><div style="left:156px;top:247px;width:1px;height:20px;background:#d4d4d4;"></div><div style="left:220px;top:247px;width:1px;height:20px;background:#d4d4d4;"></div><div style="left:284px;top:247px;width:1px;height:20px;background:#d4d4d4;"></div><div style="left:476px;top:247px;width:1px;height:20px;background:#d4d4d4;"></div><div style="left:540px;top:247px;width:1px;height:20px;background:#d4d4d4;"></div><div style="left:604px;top:247px;width:1px;height:20px;background:#d4d4d4;"></div><div style="left:668px;top:247px;width:1px;height:20px;background:#d4d4d4;"></div><div style="left:732px;top:247px;width:1px;height:20px;background:#d4d4d4;"></div><div style="left:796px;top:247px;width:1px;height:20px;background:#d4d4d4;"></div><div style="left:860px;top:247px;width:1px;height:20px;background:#d4d4d4;"></div><div style="left:924px;top:247px;width:1px;height:20px;background:#d4d4d4;"></div><div style="left:988px;top:247px;width:1px;height:20px;background:#d4d4d4;"></div><div style="left:29px;top:247px;width:63px;height:19px;overflow:hidden"><span class="c" style="left:2.00px;top:1px;transform:scaleX(0.953);">01-</span><span class="c" style="left:20.59px;top:1px;transform:scaleX(1.044);">Arquivo</span></div><div style="left:93px;top:247px;width:191px;height:19px;overflow:hidden"><span class="c" style="left:2.00px;top:1px;transform:scaleX(0.900);">DEFAULT</span></div><div style="left:285px;top:247px;width:319px;height:19px;overflow:hidden"><span class="c" style="left:2.00px;top:1px;transform:scaleX(0.974);">ARQDIGITAL\</span><span class="c" style="left:85.28px;top:1px;transform:scaleX(1.029);">jose.</span><span class="c" style="left:114.61px;top:1px;transform:scaleX(1.086);">locatelli</span></div><div style="left:605px;top:247px;width:63px;height:19px;overflow:hidden"><span class="c" style="left:2.00px;top:1px;">Não</span></div><div style="left:669px;top:247px;width:63px;height:19px;overflow:hidden"><span class="c" style="left:2.00px;top:1px;transform:scaleX(0.960);">Sim</span></div><div style="left:733px;top:247px;width:63px;height:19px;overflow:hidden"><span class="c b" style="left:4.00px;top:1px;transform:scaleX(0.821);">#########</span></div><div style="left:29px;top:286px;width:951px;height:1px;background:#d4d4d4;"></div><div style="left:92px;top:267px;width:1px;height:20px;background:#d4d4d4;"></div><div style="left:156px;top:267px;width:1px;height:20px;background:#d4d4d4;"></div><div style="left:220px;top:267px;width:1px;height:20px;background:#d4d4d4;"></div><div style="left:284px;top:267px;width:1px;height:20px;background:#d4d4d4;"></div><div style="left:476px;top:267px;width:1px;height:20px;background:#d4d4d4;"></div><div style="left:540px;top:267px;width:1px;height:20px;background:#d4d4d4;"></div><div style="left:604px;top:267px;width:1px;height:20px;background:#d4d4d4;"></div><div style="left:668px;top:267px;width:1px;height:20px;background:#d4d4d4;"></div><div style="left:732px;top:267px;width:1px;height:20px;background:#d4d4d4;"></div><div style="left:796px;top:267px;width:1px;height:20px;background:#d4d4d4;"></div><div style="left:860px;top:267px;width:1px;height:20px;background:#d4d4d4;"></div><div style="left:924px;top:267px;width:1px;height:20px;background:#d4d4d4;"></div><div style="left:988px;top:267px;width:1px;height:20px;background:#d4d4d4;"></div><div style="left:29px;top:267px;width:63px;height:19px;overflow:hidden"><span class="c" style="left:2.00px;top:1px;transform:scaleX(0.953);">02-</span><span class="c" style="left:20.59px;top:1px;">Processamento</span></div><div style="left:93px;top:267px;width:191px;height:19px;overflow:hidden"><span class="c" style="left:2.00px;top:1px;transform:scaleX(0.900);">DEFAULT</span></div><div style="left:285px;top:267px;width:319px;height:19px;overflow:hidden"><span class="c" style="left:2.00px;top:1px;transform:scaleX(0.974);">ARQDIGITAL\</span><span class="c" style="left:85.28px;top:1px;transform:scaleX(1.029);">jose.</span><span class="c" style="left:114.61px;top:1px;transform:scaleX(1.086);">locatelli</span></div><div style="left:605px;top:267px;width:63px;height:19px;overflow:hidden"><span class="c" style="left:2.00px;top:1px;">Não</span></div><div style="left:669px;top:267px;width:63px;height:19px;overflow:hidden"><span class="c" style="left:2.00px;top:1px;transform:scaleX(0.960);">Sim</span></div><div style="left:733px;top:267px;width:63px;height:19px;overflow:hidden"><span class="c b" style="left:4.00px;top:1px;transform:scaleX(0.821);">#########</span></div><div style="left:29px;top:306px;width:951px;height:1px;background:#d4d4d4;"></div><div style="left:92px;top:287px;width:1px;height:20px;background:#d4d4d4;"></div><div style="left:156px;top:287px;width:1px;height:20px;background:#d4d4d4;"></div><div style="left:220px;top:287px;width:1px;height:20px;background:#d4d4d4;"></div><div style="left:284px;top:287px;width:1px;height:20px;background:#d4d4d4;"></div><div style="left:476px;top:287px;width:1px;height:20px;background:#d4d4d4;"></div><div style="left:540px;top:287px;width:1px;height:20px;background:#d4d4d4;"></div><div style="left:604px;top:287px;width:1px;height:20px;background:#d4d4d4;"></div><div style="left:668px;top:287px;width:1px;height:20px;background:#d4d4d4;"></div><div style="left:732px;top:287px;width:1px;height:20px;background:#d4d4d4;"></div><div style="left:796px;top:287px;width:1px;height:20px;background:#d4d4d4;"></div><div style="left:860px;top:287px;width:1px;height:20px;background:#d4d4d4;"></div><div style="left:924px;top:287px;width:1px;height:20px;background:#d4d4d4;"></div><div style="left:988px;top:287px;width:1px;height:20px;background:#d4d4d4;"></div><div style="left:29px;top:287px;width:63px;height:19px;overflow:hidden"><span class="c" style="left:2.00px;top:1px;transform:scaleX(0.953);">03-</span><span class="c" style="left:20.59px;top:1px;">Circular </span><span class="c" style="left:70.73px;top:1px;transform:scaleX(1.057);">Interna</span></div><div style="left:93px;top:287px;width:191px;height:19px;overflow:hidden"><span class="c" style="left:2.00px;top:1px;transform:scaleX(0.900);">DEFAULT</span></div><div style="left:285px;top:287px;width:319px;height:19px;overflow:hidden"><span class="c" style="left:2.00px;top:1px;transform:scaleX(0.974);">ARQDIGITAL\</span><span class="c" style="left:85.28px;top:1px;transform:scaleX(1.029);">jose.</span><span class="c" style="left:114.61px;top:1px;transform:scaleX(1.086);">locatelli</span></div><div style="left:605px;top:287px;width:63px;height:19px;overflow:hidden"><span class="c" style="left:2.00px;top:1px;">Não</span></div><div style="left:669px;top:287px;width:63px;height:19px;overflow:hidden"><span class="c" style="left:2.00px;top:1px;transform:scaleX(0.960);">Sim</span></div><div style="left:733px;top:287px;width:63px;height:19px;overflow:hidden"><span class="c b" style="left:4.00px;top:1px;transform:scaleX(0.821);">#########</span></div><div style="left:29px;top:326px;width:951px;height:1px;background:#d4d4d4;"></div><div style="left:92px;top:307px;width:1px;height:20px;background:#d4d4d4;"></div><div style="left:156px;top:307px;width:1px;height:20px;background:#d4d4d4;"></div><div style="left:220px;top:307px;width:1px;height:20px;background:#d4d4d4;"></div><div style="left:284px;top:307px;width:1px;height:20px;background:#d4d4d4;"></div><div style="left:476px;top:307px;width:1px;height:20px;background:#d4d4d4;"></div><div style="left:540px;top:307px;width:1px;height:20px;background:#d4d4d4;"></div><div style="left:604px;top:307px;width:1px;height:20px;background:#d4d4d4;"></div><div style="left:668px;top:307px;width:1px;height:20px;background:#d4d4d4;"></div><div style="left:732px;top:307px;width:1px;height:20px;background:#d4d4d4;"></div><div style="left:796px;top:307px;width:1px;height:20px;background:#d4d4d4;"></div><div style="left:860px;top:307px;width:1px;height:20px;background:#d4d4d4;"></div><div style="left:924px;top:307px;width:1px;height:20px;background:#d4d4d4;"></div><div style="left:988px;top:307px;width:1px;height:20px;background:#d4d4d4;"></div><div style="left:29px;top:307px;width:63px;height:19px;overflow:hidden"><span class="c" style="left:2.00px;top:1px;transform:scaleX(0.953);">04-</span><span class="c" style="left:20.59px;top:1px;transform:scaleX(0.958);">Relação </span><span class="c" style="left:71.66px;top:1px;">de </span><span class="c" style="left:90.39px;top:1px;transform:scaleX(1.005);">descarte, </span><span class="c" style="left:149.98px;top:1px;transform:scaleX(1.016);">quitação e </span><span class="c" style="left:217.08px;top:1px;transform:scaleX(1.024);">cancelamento</span></div><div style="left:93px;top:307px;width:191px;height:19px;overflow:hidden"><span class="c" style="left:2.00px;top:1px;transform:scaleX(0.900);">DEFAULT</span></div><div style="left:285px;top:307px;width:319px;height:19px;overflow:hidden"><span class="c" style="left:2.00px;top:1px;transform:scaleX(0.974);">ARQDIGITAL\</span><span class="c" style="left:85.28px;top:1px;transform:scaleX(1.029);">jose.</span><span class="c" style="left:114.61px;top:1px;transform:scaleX(1.086);">locatelli</span></div><div style="left:605px;top:307px;width:63px;height:19px;overflow:hidden"><span class="c" style="left:2.00px;top:1px;">Não</span></div><div style="left:669px;top:307px;width:63px;height:19px;overflow:hidden"><span class="c" style="left:2.00px;top:1px;transform:scaleX(0.960);">Sim</span></div><div style="left:733px;top:307px;width:63px;height:19px;overflow:hidden"><span class="c b" style="left:4.00px;top:1px;transform:scaleX(0.821);">#########</span></div><div style="left:29px;top:346px;width:951px;height:1px;background:#d4d4d4;"></div><div style="left:92px;top:327px;width:1px;height:20px;background:#d4d4d4;"></div><div style="left:156px;top:327px;width:1px;height:20px;background:#d4d4d4;"></div><div style="left:220px;top:327px;width:1px;height:20px;background:#d4d4d4;"></div><div style="left:284px;top:327px;width:1px;height:20px;background:#d4d4d4;"></div><div style="left:476px;top:327px;width:1px;height:20px;background:#d4d4d4;"></div><div style="left:540px;top:327px;width:1px;height:20px;background:#d4d4d4;"></div><div style="left:604px;top:327px;width:1px;height:20px;background:#d4d4d4;"></div><div style="left:668px;top:327px;width:1px;height:20px;background:#d4d4d4;"></div><div style="left:732px;top:327px;width:1px;height:20px;background:#d4d4d4;"></div><div style="left:796px;top:327px;width:1px;height:20px;background:#d4d4d4;"></div><div style="left:860px;top:327px;width:1px;height:20px;background:#d4d4d4;"></div><div style="left:924px;top:327px;width:1px;height:20px;background:#d4d4d4;"></div><div style="left:988px;top:327px;width:1px;height:20px;background:#d4d4d4;"></div><div style="left:29px;top:327px;width:63px;height:19px;overflow:hidden"><span class="c" style="left:2.00px;top:1px;transform:scaleX(0.953);">05-</span><span class="c" style="left:20.59px;top:1px;transform:scaleX(0.995);">Lixeira</span></div><div style="left:93px;top:327px;width:191px;height:19px;overflow:hidden"><span class="c" style="left:2.00px;top:1px;transform:scaleX(0.900);">DEFAULT</span></div><div style="left:285px;top:327px;width:319px;height:19px;overflow:hidden"><span class="c" style="left:2.00px;top:1px;transform:scaleX(0.974);">ARQDIGITAL\</span><span class="c" style="left:85.28px;top:1px;transform:scaleX(1.029);">jose.</span><span class="c" style="left:114.61px;top:1px;transform:scaleX(1.086);">locatelli</span></div><div style="left:605px;top:327px;width:63px;height:19px;overflow:hidden"><span class="c" style="left:2.00px;top:1px;">Não</span></div><div style="left:669px;top:327px;width:63px;height:19px;overflow:hidden"><span class="c" style="left:2.00px;top:1px;transform:scaleX(0.960);">Sim</span></div><div style="left:733px;top:327px;width:63px;height:19px;overflow:hidden"><span class="c b" style="left:4.00px;top:1px;transform:scaleX(0.821);">#########</span></div><div style="left:29px;top:366px;width:951px;height:1px;background:#d4d4d4;"></div><div style="left:220px;top:347px;width:1px;height:20px;background:#d4d4d4;"></div><div style="left:284px;top:347px;width:1px;height:20px;background:#d4d4d4;"></div><div style="left:348px;top:347px;width:1px;height:20px;background:#d4d4d4;"></div><div style="left:412px;top:347px;width:1px;height:20px;background:#d4d4d4;"></div><div style="left:476px;top:347px;width:1px;height:20px;background:#d4d4d4;"></div><div style="left:540px;top:347px;width:1px;height:20px;background:#d4d4d4;"></div><div style="left:604px;top:347px;width:1px;height:20px;background:#d4d4d4;"></div><div style="left:668px;top:347px;width:1px;height:20px;background:#d4d4d4;"></div><div style="left:732px;top:347px;width:1px;height:20px;background:#d4d4d4;"></div><div style="left:796px;top:347px;width:1px;height:20px;background:#d4d4d4;"></div><div style="left:860px;top:347px;width:1px;height:20px;background:#d4d4d4;"></div><div style="left:924px;top:347px;width:1px;height:20px;background:#d4d4d4;"></div><div style="left:988px;top:347px;width:1px;height:20px;background:#d4d4d4;"></div><div style="left:29px;top:347px;width:255px;height:19px;overflow:hidden"><span class="c" style="left:2.00px;top:1px;transform:scaleX(0.983);">Imagens </span><span class="c" style="left:56.61px;top:1px;transform:scaleX(1.018);">Contratos </span><span class="c" style="left:120.03px;top:1px;transform:scaleX(0.975);">Baixados</span></div><div style="left:285px;top:347px;width:319px;height:19px;overflow:hidden"><span class="c" style="left:2.00px;top:1px;transform:scaleX(1.016);">ADMIN</span></div><div style="left:605px;top:347px;width:63px;height:19px;overflow:hidden"><span class="c" style="left:2.00px;top:1px;">Não</span></div><div style="left:669px;top:347px;width:63px;height:19px;overflow:hidden"><span class="c" style="left:2.00px;top:1px;transform:scaleX(0.960);">Sim</span></div><div style="left:733px;top:347px;width:63px;height:19px;overflow:hidden"><span class="c b" style="left:4.00px;top:1px;transform:scaleX(0.821);">#########</span></div><div style="left:29px;top:386px;width:951px;height:1px;background:#d4d4d4;"></div><div style="left:92px;top:367px;width:1px;height:20px;background:#d4d4d4;"></div><div style="left:156px;top:367px;width:1px;height:20px;background:#d4d4d4;"></div><div style="left:220px;top:367px;width:1px;height:20px;background:#d4d4d4;"></div><div style="left:284px;top:367px;width:1px;height:20px;background:#d4d4d4;"></div><div style="left:476px;top:367px;width:1px;height:20px;background:#d4d4d4;"></div><div style="left:540px;top:367px;width:1px;height:20px;background:#d4d4d4;"></div><div style="left:604px;top:367px;width:1px;height:20px;background:#d4d4d4;"></div><div style="left:668px;top:367px;width:1px;height:20px;background:#d4d4d4;"></div><div style="left:732px;top:367px;width:1px;height:20px;background:#d4d4d4;"></div><div style="left:796px;top:367px;width:1px;height:20px;background:#d4d4d4;"></div><div style="left:860px;top:367px;width:1px;height:20px;background:#d4d4d4;"></div><div style="left:924px;top:367px;width:1px;height:20px;background:#d4d4d4;"></div><div style="left:988px;top:367px;width:1px;height:20px;background:#d4d4d4;"></div><div style="left:29px;top:367px;width:63px;height:19px;overflow:hidden"><span class="c" style="left:2.00px;top:1px;transform:scaleX(0.958);">MOVIDOS</span></div><div style="left:285px;top:367px;width:319px;height:19px;overflow:hidden"><span class="c" style="left:2.00px;top:1px;transform:scaleX(0.958);">ARQDIGITAL\</span><span class="c" style="left:83.94px;top:1px;transform:scaleX(1.045);">rafael.</span><span class="c" style="left:123.13px;top:1px;transform:scaleX(0.962);">chagas</span></div><div style="left:605px;top:367px;width:63px;height:19px;overflow:hidden"><span class="c" style="left:2.00px;top:1px;">Não</span></div><div style="left:669px;top:367px;width:63px;height:19px;overflow:hidden"><span class="c" style="left:2.00px;top:1px;transform:scaleX(0.960);">Sim</span></div><div style="left:733px;top:367px;width:63px;height:19px;overflow:hidden"><span class="c b" style="left:4.00px;top:1px;transform:scaleX(0.821);">#########</span></div><div style="left:29px;top:406px;width:951px;height:1px;background:#d4d4d4;"></div><div style="left:92px;top:387px;width:1px;height:20px;background:#d4d4d4;"></div><div style="left:156px;top:387px;width:1px;height:20px;background:#d4d4d4;"></div><div style="left:220px;top:387px;width:1px;height:20px;background:#d4d4d4;"></div><div style="left:284px;top:387px;width:1px;height:20px;background:#d4d4d4;"></div><div style="left:348px;top:387px;width:1px;height:20px;background:#d4d4d4;"></div><div style="left:412px;top:387px;width:1px;height:20px;background:#d4d4d4;"></div><div style="left:476px;top:387px;width:1px;height:20px;background:#d4d4d4;"></div><div style="left:540px;top:387px;width:1px;height:20px;background:#d4d4d4;"></div><div style="left:604px;top:387px;width:1px;height:20px;background:#d4d4d4;"></div><div style="left:668px;top:387px;width:1px;height:20px;background:#d4d4d4;"></div><div style="left:732px;top:387px;width:1px;height:20px;background:#d4d4d4;"></div><div style="left:796px;top:387px;width:1px;height:20px;background:#d4d4d4;"></div><div style="left:860px;top:387px;width:1px;height:20px;background:#d4d4d4;"></div><div style="left:924px;top:387px;width:1px;height:20px;background:#d4d4d4;"></div><div style="left:988px;top:387px;width:1px;height:20px;background:#d4d4d4;"></div><div style="left:29px;top:387px;width:255px;height:19px;overflow:hidden"><span class="c" style="left:2.00px;top:1px;transform:scaleX(1.054);">teste</span></div><div style="left:285px;top:387px;width:319px;height:19px;overflow:hidden"><span class="c" style="left:2.00px;top:1px;transform:scaleX(1.016);">ADMIN</span></div><div style="left:605px;top:387px;width:63px;height:19px;overflow:hidden"><span class="c" style="left:2.00px;top:1px;">Não</span></div><div style="left:669px;top:387px;width:63px;height:19px;overflow:hidden"><span class="c" style="left:2.00px;top:1px;transform:scaleX(0.960);">Sim</span></div><div style="left:733px;top:387px;width:63px;height:19px;overflow:hidden"><span class="c b" style="left:4.00px;top:1px;transform:scaleX(0.821);">#########</span></div><div style="left:29px;top:426px;width:951px;height:1px;background:#d4d4d4;"></div><div style="left:92px;top:407px;width:1px;height:20px;background:#d4d4d4;"></div><div style="left:156px;top:407px;width:1px;height:20px;background:#d4d4d4;"></div><div style="left:220px;top:407px;width:1px;height:20px;background:#d4d4d4;"></div><div style="left:284px;top:407px;width:1px;height:20px;background:#d4d4d4;"></div><div style="left:348px;top:407px;width:1px;height:20px;background:#d4d4d4;"></div><div style="left:412px;top:407px;width:1px;height:20px;background:#d4d4d4;"></div><div style="left:476px;top:407px;width:1px;height:20px;background:#d4d4d4;"></div><div style="left:540px;top:407px;width:1px;height:20px;background:#d4d4d4;"></div><div style="left:604px;top:407px;width:1px;height:20px;background:#d4d4d4;"></div><div style="left:668px;top:407px;width:1px;height:20px;background:#d4d4d4;"></div><div style="left:732px;top:407px;width:1px;height:20px;background:#d4d4d4;"></div><div style="left:796px;top:407px;width:1px;height:20px;background:#d4d4d4;"></div><div style="left:860px;top:407px;width:1px;height:20px;background:#d4d4d4;"></div><div style="left:924px;top:407px;width:1px;height:20px;background:#d4d4d4;"></div><div style="left:988px;top:407px;width:1px;height:20px;background:#d4d4d4;"></div><div style="left:29px;top:407px;width:63px;height:19px;overflow:hidden"><span class="c" style="left:2.00px;top:1px;transform:scaleX(1.023);">teste - </span><span class="c" style="left:44.22px;top:1px;transform:scaleX(1.147);">dit</span></div><div style="left:93px;top:407px;width:191px;height:19px;overflow:hidden"><span class="c" style="left:2.00px;top:1px;transform:scaleX(0.900);">DEFAULT</span></div><div style="left:285px;top:407px;width:63px;height:19px;overflow:hidden"><span class="c" style="left:2.00px;top:1px;transform:scaleX(1.016);">ADMIN</span></div><div style="left:349px;top:407px;width:255px;height:19px;overflow:hidden"><span class="c" style="left:2.00px;top:1px;transform:scaleX(0.955);">181 b</span></div><div style="left:605px;top:407px;width:63px;height:19px;overflow:hidden"><span class="c" style="left:2.00px;top:1px;">Não</span></div><div style="left:669px;top:407px;width:63px;height:19px;overflow:hidden"><span class="c" style="left:2.00px;top:1px;transform:scaleX(0.960);">Sim</span></div><div style="left:733px;top:407px;width:63px;height:19px;overflow:hidden"><span class="c b" style="left:4.00px;top:1px;transform:scaleX(0.821);">#########</span></div><div style="left:29px;top:446px;width:951px;height:1px;background:#d4d4d4;"></div><div style="left:92px;top:427px;width:1px;height:20px;background:#d4d4d4;"></div><div style="left:156px;top:427px;width:1px;height:20px;background:#d4d4d4;"></div><div style="left:220px;top:427px;width:1px;height:20px;background:#d4d4d4;"></div><div style="left:284px;top:427px;width:1px;height:20px;background:#d4d4d4;"></div><div style="left:348px;top:427px;width:1px;height:20px;background:#d4d4d4;"></div><div style="left:412px;top:427px;width:1px;height:20px;background:#d4d4d4;"></div><div style="left:476px;top:427px;width:1px;height:20px;background:#d4d4d4;"></div><div style="left:540px;top:427px;width:1px;height:20px;background:#d4d4d4;"></div><div style="left:604px;top:427px;width:1px;height:20px;background:#d4d4d4;"></div><div style="left:668px;top:427px;width:1px;height:20px;background:#d4d4d4;"></div><div style="left:732px;top:427px;width:1px;height:20px;background:#d4d4d4;"></div><div style="left:796px;top:427px;width:1px;height:20px;background:#d4d4d4;"></div><div style="left:860px;top:427px;width:1px;height:20px;background:#d4d4d4;"></div><div style="left:924px;top:427px;width:1px;height:20px;background:#d4d4d4;"></div><div style="left:988px;top:427px;width:1px;height:20px;background:#d4d4d4;"></div><div style="left:29px;top:466px;width:951px;height:1px;background:#d4d4d4;"></div><div style="left:92px;top:447px;width:1px;height:20px;background:#d4d4d4;"></div><div style="left:156px;top:447px;width:1px;height:20px;background:#d4d4d4;"></div><div style="left:220px;top:447px;width:1px;height:20px;background:#d4d4d4;"></div><div style="left:284px;top:447px;width:1px;height:20px;background:#d4d4d4;"></div><div style="left:348px;top:447px;width:1px;height:20px;background:#d4d4d4;"></div><div style="left:412px;top:447px;width:1px;height:20px;background:#d4d4d4;"></div><div style="left:476px;top:447px;width:1px;height:20px;background:#d4d4d4;"></div><div style="left:540px;top:447px;width:1px;height:20px;background:#d4d4d4;"></div><div style="left:604px;top:447px;width:1px;height:20px;background:#d4d4d4;"></div><div style="left:668px;top:447px;width:1px;height:20px;background:#d4d4d4;"></div><div style="left:732px;top:447px;width:1px;height:20px;background:#d4d4d4;"></div><div style="left:796px;top:447px;width:1px;height:20px;background:#d4d4d4;"></div><div style="left:860px;top:447px;width:1px;height:20px;background:#d4d4d4;"></div><div style="left:924px;top:447px;width:1px;height:20px;background:#d4d4d4;"></div><div style="left:988px;top:447px;width:1px;height:20px;background:#d4d4d4;"></div><div style="left:29px;top:486px;width:951px;height:1px;background:#d4d4d4;"></div><div style="left:92px;top:467px;width:1px;height:20px;background:#d4d4d4;"></div><div style="left:156px;top:467px;width:1px;height:20px;background:#d4d4d4;"></div><div style="left:220px;top:467px;width:1px;height:20px;background:#d4d4d4;"></div><div style="left:284px;top:467px;width:1px;height:20px;background:#d4d4d4;"></div><div style="left:348px;top:467px;width:1px;height:20px;background:#d4d4d4;"></div><div style="left:412px;top:467px;width:1px;height:20px;background:#d4d4d4;"></div><div style="left:476px;top:467px;width:1px;height:20px;background:#d4d4d4;"></div><div style="left:540px;top:467px;width:1px;height:20px;background:#d4d4d4;"></div><div style="left:604px;top:467px;width:1px;height:20px;background:#d4d4d4;"></div><div style="left:668px;top:467px;width:1px;height:20px;background:#d4d4d4;"></div><div style="left:732px;top:467px;width:1px;height:20px;background:#d4d4d4;"></div><div style="left:796px;top:467px;width:1px;height:20px;background:#d4d4d4;"></div><div style="left:860px;top:467px;width:1px;height:20px;background:#d4d4d4;"></div><div style="left:924px;top:467px;width:1px;height:20px;background:#d4d4d4;"></div><div style="left:988px;top:467px;width:1px;height:20px;background:#d4d4d4;"></div><div style="left:27px;top:225px;width:67px;height:23px;border:2px solid #217346;box-sizing:border-box"></div><div style="left:89px;top:243px;width:5px;height:5px;background:#217346;border:1px solid #fff;box-sizing:content-box"></div></div><div style="left:0;top:0;width:973px;height:405px;overflow:hidden"><span class="hw" style="font-size:36px;font-weight:300;color:#0000ff;transform:matrix(1.071,0,-0.135,1.000,872.29,262.50)">L</span><span class="hw" style="font-size:31px;font-weight:300;color:#0000ff;transform:matrix(1.038,0,-0.087,0.978,892.41,270.13)">F</span><div class="hs" style="width:6px;height:23.5px;transform:matrix(0.400,0,-0.213,0.979,920.30,285.00)"><span style="left:-9px;top:-6px;font-size:40px;font-weight:700;line-height:1;color:#0000ff;white-space:pre">1</span></div><span class="hw" style="font-size:29px;font-weight:300;color:#0000ff;transform:matrix(1.042,0,-0.095,1.000,928.49,284.50)">0</span><span class="hw" style="font-size:30px;font-weight:400;color:#0000ff;transform:matrix(0.625,0,-0.000,0.750,939.25,297.00)">.</span><div class="hs" style="width:6px;height:23.5px;transform:matrix(0.400,0,-0.349,0.830,957.00,304.00)"><span style="left:-9px;top:-6px;font-size:40px;font-weight:700;line-height:1;color:#0000ff;white-space:pre">1</span></div></div><span class="hw" style="font-size:40px;font-weight:300;color:#0000ff;transform:matrix(0.938,0,-0.224,1.000,841.54,654.50)">L</span><span class="hw" style="font-size:33px;font-weight:300;color:#0000ff;transform:matrix(1.231,0,0.021,1.000,852.95,665.00)">F</span><div class="hs" style="width:6px;height:23.5px;transform:matrix(0.433,0,-0.055,1.085,897.30,669.50)"><span style="left:-9px;top:-6px;font-size:40px;font-weight:700;line-height:1;color:#0000ff;white-space:pre">1</span></div><span class="hw" style="font-size:38px;font-weight:300;color:#0000ff;transform:matrix(1.062,0,-0.074,1.037,902.97,662.20)">0</span>
</body></html>
